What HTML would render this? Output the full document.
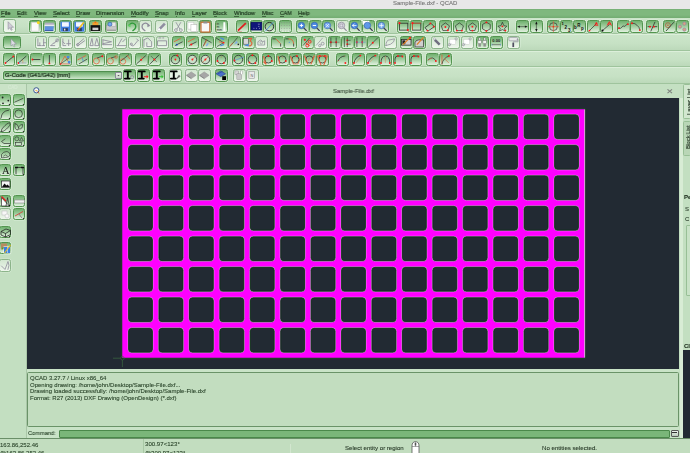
<!DOCTYPE html><html><head><meta charset="utf-8"><style>
*{margin:0;padding:0;box-sizing:border-box}
html,body{width:690px;height:453px;overflow:hidden;background:#c3dfc1;font-family:"Liberation Sans", sans-serif;}
.a{position:absolute}
.t{position:absolute;white-space:nowrap;line-height:1;-webkit-text-stroke:0.1px currentColor;will-change:transform}
.b,.d,.f,.p{position:absolute;border-radius:2.5px}
.b{border:1px solid #53954f;background:linear-gradient(#6fb06e,#a2cea0 50%,#e2f1e0);box-shadow:0 0 0 .6px rgba(228,243,226,.7)}
.d{border:1px solid #8cb48a;background:linear-gradient(#d2e6d0,#eef6ec);box-shadow:0 0 0 .6px rgba(228,243,226,.6)}
.f{border:1px solid #86b384;background:linear-gradient(#e2eee0,#eff7ee);}
.p{border:1px solid #4f914e;background:linear-gradient(#5fa35e,#93c691 55%,#d6ebd4);}
.sep{position:absolute;left:0;width:690px;height:1px;background:#9fc49d}
.sepl{position:absolute;left:0;width:690px;height:1px;background:#dcefda}
svg.i{position:absolute;overflow:visible}
</style></head><body>
<div class="a" style="left:0;top:0;width:690px;height:8.5px;background:#e8e8e8"></div>
<div class="t" style="left:392.5px;top:-0.41px;font-size:6.0px;color:#747474;">Sample-File.dxf - QCAD</div>
<div class="a" style="left:0;top:9px;width:690px;height:9px;background:linear-gradient(#72ac71 0px,#7fb87e 1px,#7fb87e 6px,#76b075 8px,#72ab71)"></div>
<div class="t" style="left:1.2px;top:9.99px;font-size:6.0px;color:#243f25;-webkit-text-stroke:0.22px #243f25;">File</div>
<div class="a" style="left:1.40px;top:15.9px;width:3.68px;height:0.5px;background:rgba(40,70,40,.7)"></div>
<div class="t" style="left:17.4px;top:9.99px;font-size:6.0px;color:#243f25;transform:scaleX(0.938);transform-origin:0 0;-webkit-text-stroke:0.22px #243f25;">Edit</div>
<div class="a" style="left:17.60px;top:15.9px;width:3.75px;height:0.5px;background:rgba(40,70,40,.7)"></div>
<div class="t" style="left:34.1px;top:9.99px;font-size:6.0px;color:#243f25;transform:scaleX(0.954);transform-origin:0 0;-webkit-text-stroke:0.22px #243f25;">View</div>
<div class="a" style="left:34.30px;top:15.9px;width:3.82px;height:0.5px;background:rgba(40,70,40,.7)"></div>
<div class="t" style="left:52.9px;top:9.99px;font-size:6.0px;color:#243f25;-webkit-text-stroke:0.22px #243f25;">Select</div>
<div class="a" style="left:53.10px;top:15.9px;width:4.01px;height:0.5px;background:rgba(40,70,40,.7)"></div>
<div class="t" style="left:75.9px;top:9.99px;font-size:6.0px;color:#243f25;transform:scaleX(1.007);transform-origin:0 0;-webkit-text-stroke:0.22px #243f25;">Draw</div>
<div class="a" style="left:76.10px;top:15.9px;width:4.36px;height:0.5px;background:rgba(40,70,40,.7)"></div>
<div class="t" style="left:96.3px;top:9.99px;font-size:6.0px;color:#243f25;-webkit-text-stroke:0.22px #243f25;">Dimension</div>
<div class="a" style="left:100.83px;top:15.9px;width:1.60px;height:0.5px;background:rgba(40,70,40,.7)"></div>
<div class="t" style="left:131px;top:9.99px;font-size:6.0px;color:#243f25;transform:scaleX(0.990);transform-origin:0 0;-webkit-text-stroke:0.22px #243f25;">Modify</div>
<div class="a" style="left:131.20px;top:15.9px;width:4.95px;height:0.5px;background:rgba(40,70,40,.7)"></div>
<div class="t" style="left:155px;top:9.99px;font-size:6.0px;color:#243f25;transform:scaleX(0.963);transform-origin:0 0;-webkit-text-stroke:0.22px #243f25;">Snap</div>
<div class="a" style="left:155.20px;top:15.9px;width:3.86px;height:0.5px;background:rgba(40,70,40,.7)"></div>
<div class="t" style="left:175.4px;top:9.99px;font-size:6.0px;color:#243f25;transform:scaleX(0.979);transform-origin:0 0;-webkit-text-stroke:0.22px #243f25;">Info</div>
<div class="a" style="left:175.60px;top:15.9px;width:1.63px;height:0.5px;background:rgba(40,70,40,.7)"></div>
<div class="t" style="left:191.9px;top:9.99px;font-size:6.0px;color:#243f25;transform:scaleX(0.986);transform-origin:0 0;-webkit-text-stroke:0.22px #243f25;">Layer</div>
<div class="a" style="left:192.10px;top:15.9px;width:3.29px;height:0.5px;background:rgba(40,70,40,.7)"></div>
<div class="t" style="left:213.3px;top:9.99px;font-size:6.0px;color:#243f25;transform:scaleX(0.941);transform-origin:0 0;-webkit-text-stroke:0.22px #243f25;">Block</div>
<div class="a" style="left:213.50px;top:15.9px;width:3.76px;height:0.5px;background:rgba(40,70,40,.7)"></div>
<div class="t" style="left:233.7px;top:9.99px;font-size:6.0px;color:#243f25;transform:scaleX(0.984);transform-origin:0 0;-webkit-text-stroke:0.22px #243f25;">Window</div>
<div class="a" style="left:233.90px;top:15.9px;width:5.57px;height:0.5px;background:rgba(40,70,40,.7)"></div>
<div class="t" style="left:261.6px;top:9.99px;font-size:6.0px;color:#243f25;transform:scaleX(0.941);transform-origin:0 0;-webkit-text-stroke:0.22px #243f25;">Misc</div>
<div class="a" style="left:261.80px;top:15.9px;width:4.70px;height:0.5px;background:rgba(40,70,40,.7)"></div>
<div class="t" style="left:279.8px;top:9.99px;font-size:6.0px;color:#243f25;transform:scaleX(0.885);transform-origin:0 0;-webkit-text-stroke:0.22px #243f25;">CAM</div>
<div class="a" style="left:280.00px;top:15.9px;width:3.83px;height:0.5px;background:rgba(40,70,40,.7)"></div>
<div class="t" style="left:298.3px;top:9.99px;font-size:6.0px;color:#243f25;transform:scaleX(0.948);transform-origin:0 0;-webkit-text-stroke:0.22px #243f25;">Help</div>
<div class="a" style="left:298.50px;top:15.9px;width:4.11px;height:0.5px;background:rgba(40,70,40,.7)"></div>
<div class="a" style="left:0;top:17.5px;width:690px;height:66px;background:#c6e1c4"></div>
<div class="sepl" style="top:17.5px"></div>
<div class="a" style="left:0;top:18px;width:690px;height:15px;background:linear-gradient(#cce5ca,#c6e1c4 60%,#bcd9ba)"></div>
<div class="a" style="left:0;top:34px;width:690px;height:16px;background:linear-gradient(#cce5ca,#c6e1c4 60%,#bcd9ba)"></div>
<div class="a" style="left:0;top:51px;width:690px;height:15px;background:linear-gradient(#cce5ca,#c6e1c4 60%,#bcd9ba)"></div>
<div class="a" style="left:0;top:67px;width:690px;height:16px;background:linear-gradient(#cce5ca,#c6e1c4 60%,#bcd9ba)"></div>
<div class="sep" style="top:33px"></div>
<div class="sepl" style="top:34px"></div>
<div class="sep" style="top:50px"></div>
<div class="sepl" style="top:51px"></div>
<div class="sep" style="top:66px"></div>
<div class="sepl" style="top:67px"></div>
<div class="sep" style="top:83px"></div>
<div class="sepl" style="top:84px"></div>
<div class="f" style="left:2.5px;top:19.3px;width:13.3px;height:13.5px"></div>
<svg class="i" style="left:2.5px;top:19.3px" width="13.3" height="13.5" viewBox="0 0 13 13"><path d="M5,3 L5,10 L6.6,8.5 L8,11 L9,10.5 L7.8,8 L10,8 Z" stroke="#8e8c9a" stroke-width="0.6" fill="#d0ccd8" stroke-linejoin="round" stroke-linecap="round"/></svg>
<div class="b" style="left:29px;top:19.5px;width:12.8px;height:13.3px"></div>
<svg class="i" style="left:29px;top:19.5px" width="12.8" height="13.3" viewBox="0 0 13 13"><rect x="2.5" y="2" width="7.5" height="9" fill="#fafafa" stroke="#c8c8c8" stroke-width="0.5" rx="0"/><circle cx="9.5" cy="2.5" r="1.5" fill="#f8d81a"/></svg>
<div class="b" style="left:43px;top:19.5px;width:12.8px;height:13.3px"></div>
<svg class="i" style="left:43px;top:19.5px" width="12.8" height="13.3" viewBox="0 0 13 13"><rect x="2" y="2.5" width="9" height="3" fill="#b0aec0" stroke="none" stroke-width="0.6" rx="0"/><rect x="1.5" y="4.5" width="10" height="1.5" fill="#e8e8f0" stroke="none" stroke-width="0.6" rx="0"/><path d="M2,6 L11,6 L10.5,10.5 L1.5,10.5 Z" stroke="none" stroke-width="0" fill="#5e90e0" stroke-linejoin="round" stroke-linecap="round"/><line x1="1.5" y1="10.5" x2="10.5" y2="10.5" stroke="#1c3aa0" stroke-width="0.8"/></svg>
<div class="b" style="left:59px;top:19.5px;width:12.8px;height:13.3px"></div>
<svg class="i" style="left:59px;top:19.5px" width="12.8" height="13.3" viewBox="0 0 13 13"><rect x="1.5" y="1.5" width="10" height="10" fill="#3f7de0" stroke="none" stroke-width="0.6" rx="0"/><rect x="3" y="2" width="7" height="4.5" fill="#f4f6ff" stroke="none" stroke-width="0.6" rx="0"/><rect x="4" y="8" width="5" height="3" fill="#2a3a60" stroke="none" stroke-width="0.6" rx="0"/><rect x="5" y="8.5" width="1.5" height="2" fill="#e0e0f0" stroke="none" stroke-width="0.6" rx="0"/></svg>
<div class="b" style="left:73px;top:19.5px;width:12.8px;height:13.3px"></div>
<svg class="i" style="left:73px;top:19.5px" width="12.8" height="13.3" viewBox="0 0 13 13"><rect x="1.5" y="1.5" width="10" height="10" fill="#3f7de0" stroke="none" stroke-width="0.6" rx="0"/><rect x="3" y="2" width="7" height="4.5" fill="#f4f6ff" stroke="none" stroke-width="0.6" rx="0"/><rect x="4" y="8" width="5" height="3" fill="#2a3a60" stroke="none" stroke-width="0.6" rx="0"/><line x1="5" y1="10" x2="11" y2="2" stroke="#f0c020" stroke-width="1.6"/><line x1="5" y1="10" x2="6.5" y2="8" stroke="#c04020" stroke-width="1.2"/></svg>
<div class="b" style="left:89px;top:19.5px;width:12.8px;height:13.3px"></div>
<svg class="i" style="left:89px;top:19.5px" width="12.8" height="13.3" viewBox="0 0 13 13"><rect x="3.5" y="2" width="6" height="4" fill="#f0a030" stroke="none" stroke-width="0.6" rx="0"/><rect x="1.5" y="5" width="10" height="6" fill="#101010" stroke="none" stroke-width="0.6" rx="0"/><rect x="3.5" y="7.5" width="6" height="2.5" fill="#d0d0d0" stroke="none" stroke-width="0.6" rx="0"/><circle cx="6.5" cy="2" r="1" fill="#f07010"/></svg>
<div class="b" style="left:105px;top:19.5px;width:12.8px;height:13.3px"></div>
<svg class="i" style="left:105px;top:19.5px" width="12.8" height="13.3" viewBox="0 0 13 13"><rect x="1.5" y="5" width="10" height="5.5" fill="#c8c8c8" stroke="#909090" stroke-width="0.5" rx="0"/><rect x="7" y="2" width="4" height="4" fill="#e8e8e8" stroke="#a0a0a0" stroke-width="0.4" rx="0"/><circle cx="5" cy="4" r="2" stroke="#3060b0" stroke-width="0.6" fill="#78a8f0"/><line x1="2" y1="10" x2="11" y2="10" stroke="#808080" stroke-width="0.6"/></svg>
<div class="b" style="left:126px;top:19.5px;width:12.8px;height:13.3px"></div>
<svg class="i" style="left:126px;top:19.5px" width="12.8" height="13.3" viewBox="0 0 13 13"><path d="M3,5 Q6,1 9.5,4.5 Q11,8 7,10.5" stroke="#2f9a3a" stroke-width="1.4" fill="none" stroke-linejoin="round" stroke-linecap="round"/><path d="M1.5,5.5 L4.5,3.5 L4.5,7 Z" stroke="none" stroke-width="0" fill="#5cd060" stroke-linejoin="round" stroke-linecap="round"/></svg>
<div class="d" style="left:139px;top:19.5px;width:12.8px;height:13.3px"></div>
<svg class="i" style="left:139px;top:19.5px" width="12.8" height="13.3" viewBox="0 0 13 13"><path d="M10,5 Q7,1 3.5,4.5 Q2,8 6,10.5" stroke="#8e8c9a" stroke-width="1.3" fill="none" stroke-linejoin="round" stroke-linecap="round"/><path d="M11.5,5.5 L8.5,3.5 L8.5,7 Z" stroke="none" stroke-width="0" fill="#8e8c9a" stroke-linejoin="round" stroke-linecap="round"/></svg>
<div class="d" style="left:155px;top:19.5px;width:12.8px;height:13.3px"></div>
<svg class="i" style="left:155px;top:19.5px" width="12.8" height="13.3" viewBox="0 0 13 13"><line x1="3.5" y1="10" x2="10" y2="3.5" stroke="#8f8da0" stroke-width="2.6"/><line x1="3.5" y1="10" x2="5" y2="8.5" stroke="#ffffff" stroke-width="2.4"/></svg>
<div class="d" style="left:172px;top:19.5px;width:12.8px;height:13.3px"></div>
<svg class="i" style="left:172px;top:19.5px" width="12.8" height="13.3" viewBox="0 0 13 13"><line x1="4" y1="2" x2="8" y2="9" stroke="#8e8c9a" stroke-width="0.8"/><line x1="9" y1="2" x2="5" y2="9" stroke="#8e8c9a" stroke-width="0.8"/><circle cx="4" cy="10" r="1.4" stroke="#8e8c9a" stroke-width="0.8" fill="none"/><circle cx="9" cy="10" r="1.4" stroke="#8e8c9a" stroke-width="0.8" fill="none"/></svg>
<div class="d" style="left:186px;top:19.5px;width:12.8px;height:13.3px"></div>
<svg class="i" style="left:186px;top:19.5px" width="12.8" height="13.3" viewBox="0 0 13 13"><rect x="2" y="2" width="6" height="7" fill="#ffffff" stroke="#c0c0c0" stroke-width="0.5" rx="0"/><rect x="5" y="4.5" width="6" height="7" fill="#ffffff" stroke="#b0b0b0" stroke-width="0.5" rx="0"/></svg>
<div class="b" style="left:199px;top:19.5px;width:12.8px;height:13.3px"></div>
<svg class="i" style="left:199px;top:19.5px" width="12.8" height="13.3" viewBox="0 0 13 13"><rect x="2" y="2" width="9" height="10" fill="#f8f8f8" stroke="#c46a30" stroke-width="1.2" rx="0"/><rect x="4.5" y="1.3" width="4" height="2" fill="#909090" stroke="none" stroke-width="0.6" rx="0"/></svg>
<div class="b" style="left:215px;top:19.5px;width:12.8px;height:13.3px"></div>
<svg class="i" style="left:215px;top:19.5px" width="12.8" height="13.3" viewBox="0 0 13 13"><text x="1.5" y="5" font-size="3.5" fill="#2b2f2b" font-family="Liberation Sans" font-weight="normal" text-anchor="start">in</text><text x="1.5" y="8" font-size="3.5" fill="#2b2f2b" font-family="Liberation Sans" font-weight="normal" text-anchor="start">m</text><text x="1.5" y="11" font-size="3.5" fill="#2b2f2b" font-family="Liberation Sans" font-weight="normal" text-anchor="start">mm</text><rect x="8.5" y="2" width="2" height="9" fill="#ffffff" stroke="none" stroke-width="0.6" rx="0"/></svg>
<div class="b" style="left:236px;top:19.5px;width:12.8px;height:13.3px"></div>
<svg class="i" style="left:236px;top:19.5px" width="12.8" height="13.3" viewBox="0 0 13 13"><line x1="2" y1="10.5" x2="10" y2="3" stroke="#e02020" stroke-width="1.8"/><line x1="1.5" y1="11.5" x2="6" y2="11.5" stroke="#e08080" stroke-width="0.6"/></svg>
<div class="b" style="left:250px;top:19.5px;width:12.8px;height:13.3px"></div>
<svg class="i" style="left:250px;top:19.5px" width="12.8" height="13.3" viewBox="0 0 13 13"><rect x="1" y="2" width="11" height="8" fill="#10167a" stroke="#000050" stroke-width="0.5" rx="0"/><circle cx="4" cy="8" r="0.5" fill="#fff"/><circle cx="6.5" cy="8" r="0.5" fill="#fff"/><circle cx="9" cy="6" r="0.5" fill="#fff"/><circle cx="9.5" cy="8" r="0.5" fill="#fff"/><line x1="8" y1="4" x2="10" y2="4" stroke="#fff" stroke-width="0.4"/></svg>
<div class="b" style="left:263px;top:19.5px;width:12.8px;height:13.3px"></div>
<svg class="i" style="left:263px;top:19.5px" width="12.8" height="13.3" viewBox="0 0 13 13"><circle cx="6.5" cy="6.5" r="4.3" stroke="#222" stroke-width="0.9" fill="none"/><line x1="2.5" y1="11" x2="10.5" y2="2" stroke="#4a88e0" stroke-width="0.8"/></svg>
<div class="b" style="left:279px;top:19.5px;width:12.8px;height:13.3px"></div>
<svg class="i" style="left:279px;top:19.5px" width="12.8" height="13.3" viewBox="0 0 13 13"><circle cx="2.5" cy="2.5" r="0.45" fill="#8a8a8a"/><circle cx="2.5" cy="5.3" r="0.45" fill="#8a8a8a"/><circle cx="2.5" cy="8.1" r="0.45" fill="#8a8a8a"/><circle cx="2.5" cy="10.899999999999999" r="0.45" fill="#8a8a8a"/><circle cx="5.3" cy="2.5" r="0.45" fill="#8a8a8a"/><circle cx="5.3" cy="5.3" r="0.45" fill="#8a8a8a"/><circle cx="5.3" cy="8.1" r="0.45" fill="#8a8a8a"/><circle cx="5.3" cy="10.899999999999999" r="0.45" fill="#8a8a8a"/><circle cx="8.1" cy="2.5" r="0.45" fill="#8a8a8a"/><circle cx="8.1" cy="5.3" r="0.45" fill="#8a8a8a"/><circle cx="8.1" cy="8.1" r="0.45" fill="#8a8a8a"/><circle cx="8.1" cy="10.899999999999999" r="0.45" fill="#8a8a8a"/><circle cx="10.899999999999999" cy="2.5" r="0.45" fill="#8a8a8a"/><circle cx="10.899999999999999" cy="5.3" r="0.45" fill="#8a8a8a"/><circle cx="10.899999999999999" cy="8.1" r="0.45" fill="#8a8a8a"/><circle cx="10.899999999999999" cy="10.899999999999999" r="0.45" fill="#8a8a8a"/></svg>
<div class="b" style="left:296px;top:19.5px;width:12.8px;height:13.3px"></div>
<svg class="i" style="left:296px;top:19.5px" width="12.8" height="13.3" viewBox="0 0 13 13"><circle cx="5.5" cy="5.3" r="3.3" stroke="#2f5fa8" stroke-width="0.6" fill="#4a88e0"/><line x1="3.8" y1="5.3" x2="7.2" y2="5.3" stroke="#fff" stroke-width="1"/><line x1="5.5" y1="3.6" x2="5.5" y2="7" stroke="#fff" stroke-width="1"/><line x1="7.9" y1="7.8" x2="10.8" y2="10.8" stroke="#3a3850" stroke-width="1.3"/></svg>
<div class="b" style="left:309px;top:19.5px;width:12.8px;height:13.3px"></div>
<svg class="i" style="left:309px;top:19.5px" width="12.8" height="13.3" viewBox="0 0 13 13"><circle cx="5.5" cy="5.3" r="3.3" stroke="#2f5fa8" stroke-width="0.6" fill="#4a88e0"/><line x1="3.8" y1="5.3" x2="7.2" y2="5.3" stroke="#fff" stroke-width="1"/><line x1="7.9" y1="7.8" x2="10.8" y2="10.8" stroke="#3a3850" stroke-width="1.3"/></svg>
<div class="b" style="left:322px;top:19.5px;width:12.8px;height:13.3px"></div>
<svg class="i" style="left:322px;top:19.5px" width="12.8" height="13.3" viewBox="0 0 13 13"><circle cx="5.5" cy="5.3" r="3.3" stroke="#2f5fa8" stroke-width="0.6" fill="#78a8f0"/><path d="M4,4 L7,7 M7,4 L4,7" stroke="#fff" stroke-width="0.7" fill="none" stroke-linejoin="round" stroke-linecap="round"/><line x1="7.9" y1="7.8" x2="10.8" y2="10.8" stroke="#3a3850" stroke-width="1.3"/></svg>
<div class="d" style="left:336px;top:19.5px;width:12.8px;height:13.3px"></div>
<svg class="i" style="left:336px;top:19.5px" width="12.8" height="13.3" viewBox="0 0 13 13"><circle cx="5.5" cy="5.3" r="3.3" stroke="#8e8c9a" stroke-width="0.8" fill="#e0dee8"/><rect x="4" y="3.8" width="3" height="3" fill="none" stroke="#8e8c9a" stroke-width="0.6" rx="0"/><line x1="7.9" y1="7.8" x2="10.8" y2="10.8" stroke="#8e8c9a" stroke-width="1.2"/></svg>
<div class="b" style="left:349px;top:19.5px;width:12.8px;height:13.3px"></div>
<svg class="i" style="left:349px;top:19.5px" width="12.8" height="13.3" viewBox="0 0 13 13"><circle cx="5.5" cy="5.3" r="3.3" stroke="#2f5fa8" stroke-width="0.6" fill="#4a88e0"/><path d="M3.8,5.3 L7.2,5.3 M3.8,5.3 L5.2,4 M3.8,5.3 L5.2,6.6" stroke="#fff" stroke-width="0.8" fill="none" stroke-linejoin="round" stroke-linecap="round"/><line x1="7.9" y1="7.8" x2="10.8" y2="10.8" stroke="#3a3850" stroke-width="1.3"/></svg>
<div class="b" style="left:362px;top:19.5px;width:12.8px;height:13.3px"></div>
<svg class="i" style="left:362px;top:19.5px" width="12.8" height="13.3" viewBox="0 0 13 13"><rect x="0.5" y="0.5" width="7" height="4" fill="#ffffff" stroke="none" stroke-width="0.6" rx="0"/><circle cx="5.5" cy="5.3" r="3.3" stroke="#2f5fa8" stroke-width="0.6" fill="#5e98e8"/><line x1="7.9" y1="7.8" x2="10.8" y2="10.8" stroke="#3a3850" stroke-width="1.3"/></svg>
<div class="b" style="left:376px;top:19.5px;width:12.8px;height:13.3px"></div>
<svg class="i" style="left:376px;top:19.5px" width="12.8" height="13.3" viewBox="0 0 13 13"><circle cx="5.5" cy="5.3" r="3.3" stroke="#2f5fa8" stroke-width="0.6" fill="#80b0f0"/><path d="M5.5,3.5 L5.5,7 M3.8,5.3 L7.2,5.3" stroke="#fff" stroke-width="0.7" fill="none" stroke-linejoin="round" stroke-linecap="round"/><line x1="7.9" y1="7.8" x2="10.8" y2="10.8" stroke="#3a3850" stroke-width="1.3"/></svg>
<div class="b" style="left:397px;top:19.5px;width:12.8px;height:13.3px"></div>
<svg class="i" style="left:397px;top:19.5px" width="12.8" height="13.3" viewBox="0 0 13 13"><rect x="2.5" y="3" width="8.5" height="7" fill="none" stroke="#2b2f2b" stroke-width="0.8" rx="0"/><circle cx="2.5" cy="3" r="1.1" fill="#ff1a1a"/><circle cx="11" cy="10" r="1.1" fill="#ff1a1a"/></svg>
<div class="b" style="left:410px;top:19.5px;width:12.8px;height:13.3px"></div>
<svg class="i" style="left:410px;top:19.5px" width="12.8" height="13.3" viewBox="0 0 13 13"><rect x="2.5" y="3" width="8.5" height="7" fill="none" stroke="#2b2f2b" stroke-width="0.8" rx="0"/><line x1="2.5" y1="3" x2="11" y2="3" stroke="#e0633c" stroke-width="0.8"/><line x1="2.5" y1="3" x2="2.5" y2="10" stroke="#e0633c" stroke-width="0.8"/><circle cx="2.5" cy="3" r="1.1" fill="#ff1a1a"/></svg>
<div class="b" style="left:423px;top:19.5px;width:12.8px;height:13.3px"></div>
<svg class="i" style="left:423px;top:19.5px" width="12.8" height="13.3" viewBox="0 0 13 13"><polygon points="2.00,7.50 8.00,3.00 11.50,6.50 5.00,11.00" stroke="#2b2f2b" stroke-width="0.8" fill="none"/><circle cx="7.5" cy="3.2" r="0.95" fill="#ff1a1a"/><circle cx="11" cy="6.5" r="0.95" fill="#ff1a1a"/><circle cx="4.5" cy="10.5" r="0.95" fill="#ff1a1a"/></svg>
<div class="b" style="left:439px;top:19.5px;width:12.8px;height:13.3px"></div>
<svg class="i" style="left:439px;top:19.5px" width="12.8" height="13.3" viewBox="0 0 13 13"><polygon points="6.50,2.70 10.59,5.67 9.03,10.48 3.97,10.48 2.41,5.67" stroke="#2b2f2b" stroke-width="0.7" fill="none"/><circle cx="6.5" cy="6.8" r="0.95" fill="#ff1a1a"/><circle cx="9" cy="10.2" r="0.95" fill="#ff1a1a"/></svg>
<div class="b" style="left:453px;top:19.5px;width:12.8px;height:13.3px"></div>
<svg class="i" style="left:453px;top:19.5px" width="12.8" height="13.3" viewBox="0 0 13 13"><polygon points="6.50,2.70 10.59,5.67 9.03,10.48 3.97,10.48 2.41,5.67" stroke="#2b2f2b" stroke-width="0.7" fill="none"/><circle cx="4" cy="10.5" r="0.95" fill="#ff1a1a"/><circle cx="9" cy="10.5" r="0.95" fill="#ff1a1a"/></svg>
<div class="b" style="left:466px;top:19.5px;width:12.8px;height:13.3px"></div>
<svg class="i" style="left:466px;top:19.5px" width="12.8" height="13.3" viewBox="0 0 13 13"><polygon points="6.50,2.70 10.59,5.67 9.03,10.48 3.97,10.48 2.41,5.67" stroke="#2b2f2b" stroke-width="0.7" fill="none"/><circle cx="6.5" cy="6.5" r="0.95" fill="#ff1a1a"/><circle cx="6.5" cy="10.5" r="0.95" fill="#ff1a1a"/></svg>
<div class="b" style="left:480px;top:19.5px;width:12.8px;height:13.3px"></div>
<svg class="i" style="left:480px;top:19.5px" width="12.8" height="13.3" viewBox="0 0 13 13"><polygon points="6.50,2.00 10.40,4.25 10.40,8.75 6.50,11.00 2.60,8.75 2.60,4.25" stroke="#2b2f2b" stroke-width="0.7" fill="none"/><circle cx="6.5" cy="2.2" r="0.95" fill="#ff1a1a"/><circle cx="6.5" cy="10.8" r="0.95" fill="#ff1a1a"/></svg>
<div class="b" style="left:496px;top:19.5px;width:12.8px;height:13.3px"></div>
<svg class="i" style="left:496px;top:19.5px" width="12.8" height="13.3" viewBox="0 0 13 13"><polygon points="6.50,2.00 8.00,5.50 11.00,6.00 8.70,8.30 9.50,11.00 6.50,9.50 3.50,11.00 4.30,8.30 2.00,6.00 5.00,5.50" stroke="#2b2f2b" stroke-width="0.7" fill="none"/><circle cx="6.5" cy="6.2" r="0.95" fill="#ff1a1a"/><circle cx="9.5" cy="10.5" r="0.95" fill="#ff1a1a"/></svg>
<div class="b" style="left:516px;top:19.5px;width:12.8px;height:13.3px"></div>
<svg class="i" style="left:516px;top:19.5px" width="12.8" height="13.3" viewBox="0 0 13 13"><line x1="1.5" y1="6.5" x2="11.5" y2="6.5" stroke="#2b2f2b" stroke-width="0.6"/><path d="M1.5,6.5 L4,5.3 L4,7.7 Z" stroke="none" stroke-width="0" fill="#111" stroke-linejoin="round" stroke-linecap="round"/><path d="M11.5,6.5 L9,5.3 L9,7.7 Z" stroke="none" stroke-width="0" fill="#111" stroke-linejoin="round" stroke-linecap="round"/></svg>
<div class="b" style="left:530px;top:19.5px;width:12.8px;height:13.3px"></div>
<svg class="i" style="left:530px;top:19.5px" width="12.8" height="13.3" viewBox="0 0 13 13"><line x1="6.5" y1="1.5" x2="6.5" y2="11.5" stroke="#2b2f2b" stroke-width="0.6"/><path d="M6.5,1.5 L5.3,4 L7.7,4 Z" stroke="none" stroke-width="0" fill="#111" stroke-linejoin="round" stroke-linecap="round"/><path d="M6.5,11.5 L5.3,9 L7.7,9 Z" stroke="none" stroke-width="0" fill="#111" stroke-linejoin="round" stroke-linecap="round"/></svg>
<div class="b" style="left:547px;top:19.5px;width:12.8px;height:13.3px"></div>
<svg class="i" style="left:547px;top:19.5px" width="12.8" height="13.3" viewBox="0 0 13 13"><circle cx="6.5" cy="6.5" r="4" stroke="#333" stroke-width="0.7" fill="none"/><line x1="6.5" y1="1" x2="6.5" y2="12" stroke="#e06040" stroke-width="0.7"/><line x1="1" y1="6.5" x2="12" y2="6.5" stroke="#e06040" stroke-width="0.7"/><circle cx="6.5" cy="6.5" r="0.9" fill="#e04020"/></svg>
<div class="b" style="left:560px;top:19.5px;width:12.8px;height:13.3px"></div>
<svg class="i" style="left:560px;top:19.5px" width="12.8" height="13.3" viewBox="0 0 13 13"><text x="1.5" y="5" font-size="4.2" fill="#111" font-family="Liberation Sans" font-weight="bold" text-anchor="start">1</text><text x="4.5" y="8.5" font-size="4.6" fill="#111" font-family="Liberation Sans" font-weight="bold" text-anchor="start">2</text><text x="8" y="12" font-size="4.6" fill="#111" font-family="Liberation Sans" font-weight="bold" text-anchor="start">3</text></svg>
<div class="b" style="left:573px;top:19.5px;width:12.8px;height:13.3px"></div>
<svg class="i" style="left:573px;top:19.5px" width="12.8" height="13.3" viewBox="0 0 13 13"><text x="1" y="9" font-size="4.5" fill="#111" font-family="Liberation Sans" font-weight="bold" text-anchor="start">b</text><text x="4.3" y="7" font-size="4.5" fill="#111" font-family="Liberation Sans" font-weight="bold" text-anchor="start">R</text><text x="8" y="9.5" font-size="4.5" fill="#111" font-family="Liberation Sans" font-weight="bold" text-anchor="start">p</text></svg>
<div class="b" style="left:587px;top:19.5px;width:12.8px;height:13.3px"></div>
<svg class="i" style="left:587px;top:19.5px" width="12.8" height="13.3" viewBox="0 0 13 13"><line x1="2.5" y1="10.5" x2="9.5" y2="3.5" stroke="#2b2f2b" stroke-width="0.7"/><path d="M8,5 L9.5,2 L11,5 Z" stroke="#ff1a1a" stroke-width="0.6" fill="none" stroke-linejoin="round" stroke-linecap="round"/><circle cx="2.5" cy="10.5" r="0.95" fill="#ff1a1a"/><circle cx="9.5" cy="3.5" r="0.9" fill="#ff1a1a"/></svg>
<div class="b" style="left:600px;top:19.5px;width:12.8px;height:13.3px"></div>
<svg class="i" style="left:600px;top:19.5px" width="12.8" height="13.3" viewBox="0 0 13 13"><line x1="2.5" y1="10.5" x2="9.5" y2="4.5" stroke="#2b2f2b" stroke-width="0.7"/><path d="M7.5,5 L9.5,1.5 L11.5,5 M8.3,3.8 L10.7,3.8" stroke="#ff1a1a" stroke-width="0.9" fill="none" stroke-linejoin="round" stroke-linecap="round"/><circle cx="2.5" cy="10.5" r="1.1" fill="#111"/></svg>
<div class="b" style="left:617px;top:19.5px;width:12.8px;height:13.3px"></div>
<svg class="i" style="left:617px;top:19.5px" width="12.8" height="13.3" viewBox="0 0 13 13"><path d="M2,8 Q4,9 5,7 Q6,5 7,6 Q8,7 9,5 Q10,4 11,4" stroke="#2b2f2b" stroke-width="0.7" fill="none" stroke-linejoin="round" stroke-linecap="round"/><circle cx="2" cy="8" r="0.95" fill="#ff1a1a"/><circle cx="11" cy="4" r="0.95" fill="#ff1a1a"/></svg>
<div class="b" style="left:630px;top:19.5px;width:12.8px;height:13.3px"></div>
<svg class="i" style="left:630px;top:19.5px" width="12.8" height="13.3" viewBox="0 0 13 13"><path d="M2,3 L5,3.5 L7,5 L9,7 L10,10" stroke="#2b2f2b" stroke-width="0.7" fill="none" stroke-linejoin="round" stroke-linecap="round"/><circle cx="2" cy="3" r="0.95" fill="#ff1a1a"/><circle cx="10" cy="10" r="0.95" fill="#ff1a1a"/></svg>
<div class="b" style="left:646px;top:19.5px;width:12.8px;height:13.3px"></div>
<svg class="i" style="left:646px;top:19.5px" width="12.8" height="13.3" viewBox="0 0 13 13"><path d="M2,6.5 L5,6.5 M8,6.5 L11,6.5 M9,2 L5,11" stroke="#2b2f2b" stroke-width="0.8" fill="none" stroke-linejoin="round" stroke-linecap="round"/><circle cx="4" cy="6.5" r="0.95" fill="#ff1a1a"/><circle cx="8" cy="6.5" r="0.95" fill="#ff1a1a"/></svg>
<div class="b" style="left:663px;top:19.5px;width:12.8px;height:13.3px"></div>
<svg class="i" style="left:663px;top:19.5px" width="12.8" height="13.3" viewBox="0 0 13 13"><circle cx="5" cy="5" r="2.5" stroke="#b06040" stroke-width="0.8" fill="none"/><circle cx="5" cy="5" r="0.8" fill="#e05030"/><line x1="3" y1="11" x2="11" y2="2" stroke="#2b2f2b" stroke-width="0.8"/></svg>
<div class="b" style="left:676px;top:19.5px;width:12.8px;height:13.3px"></div>
<svg class="i" style="left:676px;top:19.5px" width="12.8" height="13.3" viewBox="0 0 13 13"><circle cx="4" cy="6.5" r="1.6" stroke="#9088a8" stroke-width="0.7" fill="#e0a080"/><circle cx="8.5" cy="3.5" r="1.6" stroke="#9088a8" stroke-width="0.7" fill="#e0a080"/><circle cx="8.5" cy="9.5" r="1.6" stroke="#9088a8" stroke-width="0.7" fill="#e0a080"/></svg>
<div class="p" style="left:2.5px;top:36px;width:18px;height:12.5px"></div>
<svg class="i" style="left:2.5px;top:36px" width="18" height="12.5" viewBox="0 0 18 12.5"><path d="M8,3 L8,10 L9.6,8.5 L11,11 L12,10.5 L10.8,8 L13,8 Z" stroke="#8a8a98" stroke-width="0.5" fill="#dcdce4" stroke-linejoin="round" stroke-linecap="round"/></svg>
<div class="d" style="left:34.5px;top:36px;width:12.5px;height:12.5px"></div>
<svg class="i" style="left:34.5px;top:36px" width="12.5" height="12.5" viewBox="0 0 13 13"><path d="M3,3 L3,10 M3,10 L6,10 M5,7 L5,10 M9,3 L9,10 M7,10 L10,10 M9,7 L11,7" stroke="#8e8c9a" stroke-width="0.9" fill="none" stroke-linejoin="round" stroke-linecap="round"/></svg>
<div class="d" style="left:47.5px;top:36px;width:12.5px;height:12.5px"></div>
<svg class="i" style="left:47.5px;top:36px" width="12.5" height="12.5" viewBox="0 0 13 13"><path d="M3,10 L6,7 M3,10 L7,10 M8,6 L11,3 M6,8 L9,5" stroke="#8e8c9a" stroke-width="0.9" fill="none" stroke-linejoin="round" stroke-linecap="round"/><circle cx="9.5" cy="4.5" r="1.5" stroke="#8e8c9a" stroke-width="0.7" fill="none"/></svg>
<div class="d" style="left:60px;top:36px;width:12.5px;height:12.5px"></div>
<svg class="i" style="left:60px;top:36px" width="12.5" height="12.5" viewBox="0 0 13 13"><path d="M3,3 L3,10 L6,10 M3,6 L5,8 M9,4 L9,10 M7,8 L11,8" stroke="#8e8c9a" stroke-width="0.9" fill="none" stroke-linejoin="round" stroke-linecap="round"/></svg>
<div class="d" style="left:74px;top:36px;width:12.5px;height:12.5px"></div>
<svg class="i" style="left:74px;top:36px" width="12.5" height="12.5" viewBox="0 0 13 13"><path d="M3,9 L10,3 M4,10 L11,5 M3,9 L4,10" stroke="#8e8c9a" stroke-width="0.9" fill="none" stroke-linejoin="round" stroke-linecap="round"/><circle cx="4" cy="9" r="1.3" stroke="#8e8c9a" stroke-width="0.7" fill="none"/></svg>
<div class="d" style="left:87.5px;top:36px;width:12.5px;height:12.5px"></div>
<svg class="i" style="left:87.5px;top:36px" width="12.5" height="12.5" viewBox="0 0 13 13"><path d="M4,3 L2,10 L5,10 Z M9,3 L7,10 L11,10 Z" stroke="#8e8c9a" stroke-width="0.9" fill="none" stroke-linejoin="round" stroke-linecap="round"/></svg>
<div class="d" style="left:101px;top:36px;width:12.5px;height:12.5px"></div>
<svg class="i" style="left:101px;top:36px" width="12.5" height="12.5" viewBox="0 0 13 13"><path d="M2,4 L11,6 L2,8 M2,9 L11,9 M2,4 L2,9" stroke="#8e8c9a" stroke-width="0.9" fill="none" stroke-linejoin="round" stroke-linecap="round"/></svg>
<div class="d" style="left:114.5px;top:36px;width:12.5px;height:12.5px"></div>
<svg class="i" style="left:114.5px;top:36px" width="12.5" height="12.5" viewBox="0 0 13 13"><path d="M3,10 L7,3 M2,10 L11,10 M8,6 L11,3" stroke="#8e8c9a" stroke-width="0.9" fill="none" stroke-linejoin="round" stroke-linecap="round"/></svg>
<div class="d" style="left:128px;top:36px;width:12.5px;height:12.5px"></div>
<svg class="i" style="left:128px;top:36px" width="12.5" height="12.5" viewBox="0 0 13 13"><path d="M3,8 Q3,11 6,10 L10,5 M9,3 L11,5" stroke="#8e8c9a" stroke-width="0.9" fill="none" stroke-linejoin="round" stroke-linecap="round"/><circle cx="3.5" cy="8.5" r="1.2" stroke="#8e8c9a" stroke-width="0.7" fill="none"/></svg>
<div class="d" style="left:142px;top:36px;width:12.5px;height:12.5px"></div>
<svg class="i" style="left:142px;top:36px" width="12.5" height="12.5" viewBox="0 0 13 13"><path d="M2,4 L6,2 L10,6 L10,11 L5,11 L5,7 M2,4 L2,11" stroke="#8e8c9a" stroke-width="0.9" fill="none" stroke-linejoin="round" stroke-linecap="round"/></svg>
<div class="d" style="left:156px;top:36px;width:12.5px;height:12.5px"></div>
<svg class="i" style="left:156px;top:36px" width="12.5" height="12.5" viewBox="0 0 13 13"><path d="M2,5 L11,5 L11,10 L2,10 Z M3,2 L5,2 M7,2 L8,2" stroke="#8e8c9a" stroke-width="0.9" fill="none" stroke-linejoin="round" stroke-linecap="round"/></svg>
<div class="b" style="left:172px;top:36px;width:12.5px;height:12.5px"></div>
<svg class="i" style="left:172px;top:36px" width="12.5" height="12.5" viewBox="0 0 13 13"><line x1="2" y1="6" x2="9" y2="2.5" stroke="#e0633c" stroke-width="0.9"/><line x1="3" y1="10" x2="11" y2="6" stroke="#2b2f2b" stroke-width="0.8"/><circle cx="5" cy="9" r="0.9" fill="#2040c0"/></svg>
<div class="b" style="left:186px;top:36px;width:12.5px;height:12.5px"></div>
<svg class="i" style="left:186px;top:36px" width="12.5" height="12.5" viewBox="0 0 13 13"><line x1="2" y1="6" x2="9" y2="2.5" stroke="#e0633c" stroke-width="0.9"/><line x1="3" y1="10" x2="11" y2="6" stroke="#2b2f2b" stroke-width="0.8"/><circle cx="5.5" cy="8.8" r="1.1" fill="#ff1a1a"/></svg>
<div class="b" style="left:201px;top:36px;width:12.5px;height:12.5px"></div>
<svg class="i" style="left:201px;top:36px" width="12.5" height="12.5" viewBox="0 0 13 13"><line x1="1" y1="1.5" x2="11" y2="7" stroke="#2b2f2b" stroke-width="0.7"/><line x1="2" y1="11" x2="6" y2="3.5" stroke="#2b2f2b" stroke-width="0.7"/><line x1="6" y1="3.5" x2="3" y2="10" stroke="#e0633c" stroke-width="0.8"/><path d="M5,10 L7,7 L8,8 L6,11 Z" stroke="none" stroke-width="0" fill="#80a8f0" stroke-linejoin="round" stroke-linecap="round"/></svg>
<div class="b" style="left:215px;top:36px;width:12.5px;height:12.5px"></div>
<svg class="i" style="left:215px;top:36px" width="12.5" height="12.5" viewBox="0 0 13 13"><line x1="1" y1="2" x2="9" y2="7" stroke="#2b2f2b" stroke-width="0.7"/><line x1="2" y1="11" x2="9" y2="7" stroke="#2b2f2b" stroke-width="0.7"/><line x1="4" y1="6" x2="9" y2="7" stroke="#e0633c" stroke-width="0.8"/><circle cx="9" cy="7" r="0.9" fill="#ff1a1a"/><path d="M6,2 L9,3.5 M6,10 L9,9" stroke="#4a88e0" stroke-width="1.2" fill="none" stroke-linejoin="round" stroke-linecap="round"/></svg>
<div class="b" style="left:228px;top:36px;width:12.5px;height:12.5px"></div>
<svg class="i" style="left:228px;top:36px" width="12.5" height="12.5" viewBox="0 0 13 13"><line x1="2" y1="11" x2="10" y2="1.5" stroke="#2b2f2b" stroke-width="0.7"/><line x1="1.5" y1="11" x2="5" y2="7" stroke="#e0633c" stroke-width="0.8"/><path d="M6.5,9 L9,5 L10,7 Z" stroke="none" stroke-width="0" fill="#80a8f0" stroke-linejoin="round" stroke-linecap="round"/><rect x="10" y="8" width="1.5" height="1.5" fill="#222" stroke="none" stroke-width="0.6" rx="0"/></svg>
<div class="b" style="left:242px;top:36px;width:12.5px;height:12.5px"></div>
<svg class="i" style="left:242px;top:36px" width="12.5" height="12.5" viewBox="0 0 13 13"><rect x="1.5" y="2.5" width="5" height="6" fill="#d8d8d8" stroke="#333" stroke-width="0.5" rx="0"/><path d="M7,2.5 L10,2.5 L8.5,5.5 Q11,6 10,9 Q8.5,11 7,10" stroke="#e0633c" stroke-width="1.2" fill="none" stroke-linejoin="round" stroke-linecap="round"/><path d="M2,10 L7,8 L7,11 Z" stroke="none" stroke-width="0" fill="#4a88e0" stroke-linejoin="round" stroke-linecap="round"/></svg>
<div class="d" style="left:255px;top:36px;width:12.5px;height:12.5px"></div>
<svg class="i" style="left:255px;top:36px" width="12.5" height="12.5" viewBox="0 0 13 13"><path d="M3,9 L3,6 L6,4 L8,6 L10,5 L10,9 Z" stroke="#8e8c9a" stroke-width="0.8" fill="none" stroke-linejoin="round" stroke-linecap="round"/><circle cx="6.5" cy="7" r="1.3" stroke="#8e8c9a" stroke-width="0.6" fill="none"/></svg>
<div class="b" style="left:271px;top:36px;width:12.5px;height:12.5px"></div>
<svg class="i" style="left:271px;top:36px" width="12.5" height="12.5" viewBox="0 0 13 13"><line x1="1.5" y1="3" x2="5" y2="3" stroke="#2b2f2b" stroke-width="0.8"/><line x1="5" y1="3" x2="10" y2="8" stroke="#e0633c" stroke-width="0.9"/><line x1="10" y1="8" x2="10" y2="11" stroke="#2b2f2b" stroke-width="0.8"/></svg>
<div class="b" style="left:284px;top:36px;width:12.5px;height:12.5px"></div>
<svg class="i" style="left:284px;top:36px" width="12.5" height="12.5" viewBox="0 0 13 13"><line x1="1.5" y1="3" x2="5" y2="3" stroke="#2b2f2b" stroke-width="0.8"/><path d="M5,3 Q10,3 10,8" stroke="#e0633c" stroke-width="0.9" fill="none" stroke-linejoin="round" stroke-linecap="round"/><line x1="10" y1="8" x2="10" y2="11" stroke="#2b2f2b" stroke-width="0.8"/><circle cx="5.5" cy="6.5" r="0.6" fill="#4a88e0"/></svg>
<div class="b" style="left:301px;top:36px;width:12.5px;height:12.5px"></div>
<svg class="i" style="left:301px;top:36px" width="12.5" height="12.5" viewBox="0 0 13 13"><line x1="2" y1="10" x2="9" y2="2" stroke="#2b2f2b" stroke-width="0.7"/><circle cx="4" cy="4" r="1.1" fill="#ff1a1a"/><circle cx="9" cy="6" r="1.5" stroke="#ff1a1a" stroke-width="0.9" fill="none"/><circle cx="6.5" cy="10" r="1.5" stroke="#ff1a1a" stroke-width="0.9" fill="none"/><line x1="5" y1="7" x2="9" y2="10" stroke="#ff1a1a" stroke-width="0.9"/></svg>
<div class="d" style="left:314px;top:36px;width:12.5px;height:12.5px"></div>
<svg class="i" style="left:314px;top:36px" width="12.5" height="12.5" viewBox="0 0 13 13"><line x1="2" y1="10" x2="9" y2="2" stroke="#8e8c9a" stroke-width="0.7"/><circle cx="9" cy="8" r="1.5" stroke="#8e8c9a" stroke-width="0.8" fill="none"/><circle cx="6" cy="10" r="1.2" stroke="#8e8c9a" stroke-width="0.8" fill="none"/></svg>
<div class="b" style="left:328px;top:36px;width:12.5px;height:12.5px"></div>
<svg class="i" style="left:328px;top:36px" width="12.5" height="12.5" viewBox="0 0 13 13"><line x1="3" y1="1.5" x2="3" y2="11.5" stroke="#2b2f2b" stroke-width="0.7"/><line x1="8.5" y1="1.5" x2="8.5" y2="11.5" stroke="#2b2f2b" stroke-width="0.7"/><circle cx="3" cy="6.5" r="0.95" fill="#ff1a1a"/><circle cx="8.5" cy="6.5" r="0.95" fill="#ff1a1a"/><line x1="1" y1="6.5" x2="12" y2="6.5" stroke="#333" stroke-width="0.4"/></svg>
<div class="b" style="left:341px;top:36px;width:12.5px;height:12.5px"></div>
<svg class="i" style="left:341px;top:36px" width="12.5" height="12.5" viewBox="0 0 13 13"><line x1="3.5" y1="1.5" x2="3.5" y2="11.5" stroke="#2b2f2b" stroke-width="0.7"/><line x1="6.5" y1="1.5" x2="6.5" y2="11.5" stroke="#2b2f2b" stroke-width="0.7"/><circle cx="6.5" cy="4.5" r="0.95" fill="#ff1a1a"/><circle cx="6.5" cy="8.5" r="0.95" fill="#ff1a1a"/><line x1="6.5" y1="4.5" x2="10" y2="4.5" stroke="#2b2f2b" stroke-width="0.6"/><line x1="6.5" y1="8.5" x2="10" y2="8.5" stroke="#2b2f2b" stroke-width="0.6"/></svg>
<div class="b" style="left:354px;top:36px;width:12.5px;height:12.5px"></div>
<svg class="i" style="left:354px;top:36px" width="12.5" height="12.5" viewBox="0 0 13 13"><line x1="3" y1="1.5" x2="3" y2="11.5" stroke="#2b2f2b" stroke-width="0.7"/><line x1="8.5" y1="1.5" x2="8.5" y2="11.5" stroke="#2b2f2b" stroke-width="0.7"/><circle cx="3" cy="6.5" r="0.95" fill="#ff1a1a"/><circle cx="8.5" cy="6.5" r="0.95" fill="#ff1a1a"/><line x1="1" y1="6.5" x2="12" y2="6.5" stroke="#4a88e0" stroke-width="0.5"/></svg>
<div class="b" style="left:367px;top:36px;width:12.5px;height:12.5px"></div>
<svg class="i" style="left:367px;top:36px" width="12.5" height="12.5" viewBox="0 0 13 13"><line x1="1.5" y1="11.5" x2="11.5" y2="1.5" stroke="#2b2f2b" stroke-width="0.7"/><circle cx="6" cy="7" r="1" fill="#ff1a1a"/></svg>
<div class="d" style="left:384px;top:36px;width:12.5px;height:12.5px"></div>
<svg class="i" style="left:384px;top:36px" width="12.5" height="12.5" viewBox="0 0 13 13"><path d="M2,10 Q2,4 6,4 L11,3 L10,6 Q8,9 2,10 Z" stroke="#8e8c9a" stroke-width="0.8" fill="none" stroke-linejoin="round" stroke-linecap="round"/></svg>
<div class="b" style="left:400px;top:36px;width:12.5px;height:12.5px"></div>
<svg class="i" style="left:400px;top:36px" width="12.5" height="12.5" viewBox="0 0 13 13"><rect x="1.5" y="3.5" width="10" height="6" fill="#d0d0d0" stroke="#222" stroke-width="0.8" rx="0"/><rect x="2.5" y="4.5" width="3" height="4" fill="#222" stroke="none" stroke-width="0.6" rx="0"/><line x1="3" y1="9" x2="10.5" y2="1.5" stroke="#e08020" stroke-width="1.3"/><circle cx="10.5" cy="1.8" r="1" fill="#ff1a1a"/></svg>
<div class="b" style="left:413px;top:36px;width:12.5px;height:12.5px"></div>
<svg class="i" style="left:413px;top:36px" width="12.5" height="12.5" viewBox="0 0 13 13"><path d="M2,11 L2,7 Q3,4 6,4 L11,4 L11,11 Z" stroke="#333" stroke-width="0.8" fill="#d0d0d0" stroke-linejoin="round" stroke-linecap="round"/><line x1="4" y1="9" x2="11" y2="1.5" stroke="#e08020" stroke-width="1.3"/></svg>
<div class="d" style="left:431px;top:36px;width:12.5px;height:12.5px"></div>
<svg class="i" style="left:431px;top:36px" width="12.5" height="12.5" viewBox="0 0 13 13"><line x1="4" y1="4" x2="9" y2="9" stroke="#706e80" stroke-width="2.6"/><circle cx="3.5" cy="3" r="1" stroke="#8e8c9a" stroke-width="0.5" fill="#fff"/></svg>
<div class="d" style="left:447px;top:36px;width:12.5px;height:12.5px"></div>
<svg class="i" style="left:447px;top:36px" width="12.5" height="12.5" viewBox="0 0 13 13"><rect x="3" y="3.5" width="6" height="5" fill="#ffffff" stroke="#c0c0c0" stroke-width="0.4" rx="0"/><circle cx="9.5" cy="3" r="1.2" stroke="#8e8c9a" stroke-width="0.6" fill="none"/><circle cx="2.5" cy="9" r="1.2" stroke="#8e8c9a" stroke-width="0.6" fill="none"/><path d="M2,10 L4,8" stroke="#8e8c9a" stroke-width="0.6" fill="none" stroke-linejoin="round" stroke-linecap="round"/></svg>
<div class="d" style="left:461px;top:36px;width:12.5px;height:12.5px"></div>
<svg class="i" style="left:461px;top:36px" width="12.5" height="12.5" viewBox="0 0 13 13"><rect x="3" y="3.5" width="6" height="5" fill="#ffffff" stroke="#c0c0c0" stroke-width="0.4" rx="0"/><circle cx="9.5" cy="3" r="1.2" stroke="#8e8c9a" stroke-width="0.6" fill="none"/><circle cx="2.5" cy="9" r="1.2" stroke="#8e8c9a" stroke-width="0.6" fill="none"/><path d="M2,10 L4,8" stroke="#8e8c9a" stroke-width="0.6" fill="none" stroke-linejoin="round" stroke-linecap="round"/></svg>
<div class="b" style="left:476px;top:36px;width:12.5px;height:12.5px"></div>
<svg class="i" style="left:476px;top:36px" width="12.5" height="12.5" viewBox="0 0 13 13"><rect x="2.8" y="2" width="2" height="2.2" fill="#f0f0f0" stroke="#555" stroke-width="0.4" rx="0"/><rect x="1.9999999999999998" y="4.5" width="3.6" height="3.5" fill="#f4f4f4" stroke="#555" stroke-width="0.4" rx="0"/><rect x="2.5" y="8" width="2.6" height="3" fill="#909090" stroke="none" stroke-width="0.6" rx="0"/><rect x="8" y="2" width="2" height="2.2" fill="#f0f0f0" stroke="#555" stroke-width="0.4" rx="0"/><rect x="7.2" y="4.5" width="3.6" height="3.5" fill="#f4f4f4" stroke="#555" stroke-width="0.4" rx="0"/><rect x="7.7" y="8" width="2.6" height="3" fill="#909090" stroke="none" stroke-width="0.6" rx="0"/></svg>
<div class="b" style="left:490px;top:36px;width:12.5px;height:12.5px"></div>
<svg class="i" style="left:490px;top:36px" width="12.5" height="12.5" viewBox="0 0 13 13"><text x="6.5" y="6" font-size="4.2" fill="#222" font-family="Liberation Sans" font-weight="bold" text-anchor="middle">0.00</text><line x1="2" y1="9" x2="11" y2="9" stroke="#444" stroke-width="0.6"/><line x1="2" y1="8" x2="2" y2="10" stroke="#4a88e0" stroke-width="0.5"/><line x1="11" y1="8" x2="11" y2="10" stroke="#4a88e0" stroke-width="0.5"/></svg>
<div class="d" style="left:507px;top:36px;width:12.5px;height:12.5px"></div>
<svg class="i" style="left:507px;top:36px" width="12.5" height="12.5" viewBox="0 0 13 13"><rect x="2" y="1.5" width="9" height="3.5" fill="#e8e8e8" stroke="#8a8a98" stroke-width="0.6" rx="1"/><path d="M10.5,3.5 L11.5,3.5 L11.5,6 L6.5,6 L6.5,7" stroke="#8e8c9a" stroke-width="0.7" fill="none" stroke-linejoin="round" stroke-linecap="round"/><rect x="5.6" y="7" width="1.8" height="4.5" fill="#504e60" stroke="none" stroke-width="0.6" rx="0"/></svg>
<div class="b" style="left:2.5px;top:52.5px;width:12.8px;height:13px"></div>
<svg class="i" style="left:2.5px;top:52.5px" width="12.8" height="13" viewBox="0 0 13 13"><line x1="2.5" y1="10" x2="10.5" y2="3.5" stroke="#2b2f2b" stroke-width="0.8"/><circle cx="2.5" cy="10" r="0.95" fill="#ff1a1a"/><circle cx="10.5" cy="3.5" r="0.95" fill="#ff1a1a"/></svg>
<div class="b" style="left:16px;top:52.5px;width:12.8px;height:13px"></div>
<svg class="i" style="left:16px;top:52.5px" width="12.8" height="13" viewBox="0 0 13 13"><line x1="2.5" y1="10" x2="10.5" y2="3" stroke="#2b2f2b" stroke-width="0.8"/><line x1="2.5" y1="10" x2="10.5" y2="10" stroke="#9090c0" stroke-width="0.6"/><path d="M7,10 Q7.5,8 6.5,7" stroke="#e08050" stroke-width="0.5" fill="none" stroke-linejoin="round" stroke-linecap="round"/><circle cx="2.5" cy="10" r="0.95" fill="#ff1a1a"/><circle cx="3.5" cy="9.5" r="0.6" fill="#4a88e0"/></svg>
<div class="b" style="left:30px;top:52.5px;width:12.8px;height:13px"></div>
<svg class="i" style="left:30px;top:52.5px" width="12.8" height="13" viewBox="0 0 13 13"><line x1="2.5" y1="6.5" x2="10.5" y2="6.5" stroke="#2b2f2b" stroke-width="0.8"/><circle cx="2.5" cy="6.5" r="0.95" fill="#ff1a1a"/></svg>
<div class="b" style="left:43px;top:52.5px;width:12.8px;height:13px"></div>
<svg class="i" style="left:43px;top:52.5px" width="12.8" height="13" viewBox="0 0 13 13"><line x1="6.5" y1="2" x2="6.5" y2="10.5" stroke="#2b2f2b" stroke-width="0.8"/><circle cx="6.5" cy="10.5" r="0.95" fill="#ff1a1a"/></svg>
<div class="b" style="left:59px;top:52.5px;width:12.8px;height:13px"></div>
<svg class="i" style="left:59px;top:52.5px" width="12.8" height="13" viewBox="0 0 13 13"><polygon points="1.50,11.00 6.00,3.00 11.00,11.00" stroke="#e0633c" stroke-width="0.8" fill="none"/><line x1="1.5" y1="11" x2="10" y2="5" stroke="#2b2f2b" stroke-width="0.6"/><rect x="8" y="3" width="2.5" height="2" fill="#4a88e0" stroke="none" stroke-width="0.6" rx="0"/><rect x="9" y="8" width="2.5" height="2.5" fill="#4a88e0" stroke="none" stroke-width="0.6" rx="0"/><circle cx="1.5" cy="11" r="0.8" fill="#ff1a1a"/></svg>
<div class="b" style="left:76px;top:52.5px;width:12.8px;height:13px"></div>
<svg class="i" style="left:76px;top:52.5px" width="12.8" height="13" viewBox="0 0 13 13"><line x1="1.5" y1="7" x2="10" y2="2.5" stroke="#e0633c" stroke-width="0.9"/><line x1="3" y1="11" x2="11.5" y2="6" stroke="#2b2f2b" stroke-width="0.7"/><line x1="6" y1="4" x2="7.5" y2="8.5" stroke="#4a88e0" stroke-width="0.7"/></svg>
<div class="b" style="left:92px;top:52.5px;width:12.8px;height:13px"></div>
<svg class="i" style="left:92px;top:52.5px" width="12.8" height="13" viewBox="0 0 13 13"><circle cx="4.5" cy="8" r="3" stroke="#e0633c" stroke-width="0.8" fill="none"/><line x1="5" y1="5" x2="11" y2="3" stroke="#2b2f2b" stroke-width="0.7"/><circle cx="10.5" cy="3.2" r="1" fill="#ff1a1a"/></svg>
<div class="b" style="left:106px;top:52.5px;width:12.8px;height:13px"></div>
<svg class="i" style="left:106px;top:52.5px" width="12.8" height="13" viewBox="0 0 13 13"><circle cx="4.5" cy="8" r="3" stroke="#e0633c" stroke-width="0.8" fill="none"/><line x1="5" y1="5" x2="10" y2="3.5" stroke="#2b2f2b" stroke-width="0.7"/><circle cx="10.2" cy="4" r="1.3" stroke="#e0633c" stroke-width="0.7" fill="none"/></svg>
<div class="b" style="left:119px;top:52.5px;width:12.8px;height:13px"></div>
<svg class="i" style="left:119px;top:52.5px" width="12.8" height="13" viewBox="0 0 13 13"><circle cx="4" cy="8.5" r="2.8" stroke="#e0633c" stroke-width="0.8" fill="none"/><line x1="2" y1="8" x2="10" y2="1.5" stroke="#2b2f2b" stroke-width="0.7"/><line x1="8" y1="2" x2="11" y2="6" stroke="#e0633c" stroke-width="0.8"/></svg>
<div class="b" style="left:135px;top:52.5px;width:12.8px;height:13px"></div>
<svg class="i" style="left:135px;top:52.5px" width="12.8" height="13" viewBox="0 0 13 13"><line x1="1.5" y1="11" x2="11" y2="2.5" stroke="#2b2f2b" stroke-width="0.8"/><circle cx="6.3" cy="6.8" r="1" fill="#ff1a1a"/><path d="M6.5,3.5 L7.5,5.5 M8.5,3.5 L8,5" stroke="#c08050" stroke-width="0.5" fill="none" stroke-linejoin="round" stroke-linecap="round"/></svg>
<div class="b" style="left:148px;top:52.5px;width:12.8px;height:13px"></div>
<svg class="i" style="left:148px;top:52.5px" width="12.8" height="13" viewBox="0 0 13 13"><line x1="2" y1="11" x2="11" y2="2" stroke="#2b2f2b" stroke-width="0.8"/><line x1="3" y1="3" x2="9" y2="9" stroke="#2b2f2b" stroke-width="0.5"/><circle cx="6.5" cy="6.5" r="1" fill="#ff1a1a"/></svg>
<div class="b" style="left:169px;top:52.5px;width:12.8px;height:13px"></div>
<svg class="i" style="left:169px;top:52.5px" width="12.8" height="13" viewBox="0 0 13 13"><circle cx="6.5" cy="6.5" r="4.3" stroke="#2b2f2b" stroke-width="0.8" fill="none"/><circle cx="6.5" cy="6.5" r="0.9" fill="#ff1a1a"/><circle cx="8.5" cy="2.5" r="1" fill="#ff1a1a"/></svg>
<div class="b" style="left:186px;top:52.5px;width:12.8px;height:13px"></div>
<svg class="i" style="left:186px;top:52.5px" width="12.8" height="13" viewBox="0 0 13 13"><circle cx="6.5" cy="6.5" r="4.3" stroke="#2b2f2b" stroke-width="0.8" fill="#c8e0c8"/><circle cx="6.5" cy="6.5" r="1" fill="#ff1a1a"/><line x1="6.5" y1="6.5" x2="9.5" y2="3.5" stroke="#e0633c" stroke-width="0.5"/><path d="M2.5,10 L4,11" stroke="#4a88e0" stroke-width="0.5" fill="none" stroke-linejoin="round" stroke-linecap="round"/></svg>
<div class="b" style="left:199px;top:52.5px;width:12.8px;height:13px"></div>
<svg class="i" style="left:199px;top:52.5px" width="12.8" height="13" viewBox="0 0 13 13"><circle cx="6.5" cy="6.5" r="4.3" stroke="#2b2f2b" stroke-width="0.8" fill="#c8e0c8"/><line x1="3.5" y1="9.5" x2="9.5" y2="3.5" stroke="#e0633c" stroke-width="0.7"/><circle cx="6.5" cy="6.5" r="1" fill="#ff1a1a"/></svg>
<div class="b" style="left:215px;top:52.5px;width:12.8px;height:13px"></div>
<svg class="i" style="left:215px;top:52.5px" width="12.8" height="13" viewBox="0 0 13 13"><circle cx="6.5" cy="6.5" r="4.3" stroke="#2b2f2b" stroke-width="0.8" fill="none"/><circle cx="2.5" cy="8" r="0.95" fill="#ff1a1a"/><circle cx="9" cy="10" r="0.95" fill="#ff1a1a"/><line x1="6" y1="5" x2="7" y2="3" stroke="#c08050" stroke-width="0.5"/></svg>
<div class="b" style="left:232px;top:52.5px;width:12.8px;height:13px"></div>
<svg class="i" style="left:232px;top:52.5px" width="12.8" height="13" viewBox="0 0 13 13"><circle cx="6.5" cy="6.5" r="4.3" stroke="#2b2f2b" stroke-width="0.8" fill="none"/><line x1="1" y1="8" x2="12" y2="4" stroke="#4a88e0" stroke-width="0.6"/><circle cx="2.5" cy="7.5" r="0.95" fill="#ff1a1a"/></svg>
<div class="b" style="left:246px;top:52.5px;width:12.8px;height:13px"></div>
<svg class="i" style="left:246px;top:52.5px" width="12.8" height="13" viewBox="0 0 13 13"><circle cx="6.5" cy="6.5" r="4.3" stroke="#2b2f2b" stroke-width="0.8" fill="none"/><circle cx="6.5" cy="2.2" r="0.95" fill="#ff1a1a"/><circle cx="3.5" cy="9.5" r="0.95" fill="#ff1a1a"/><circle cx="9.5" cy="10" r="0.95" fill="#ff1a1a"/></svg>
<div class="b" style="left:262px;top:52.5px;width:12.8px;height:13px"></div>
<svg class="i" style="left:262px;top:52.5px" width="12.8" height="13" viewBox="0 0 13 13"><circle cx="6.5" cy="6.5" r="3.6" stroke="#2b2f2b" stroke-width="0.8" fill="none"/><line x1="1.5" y1="3" x2="4" y2="11" stroke="#e0633c" stroke-width="1.1"/><circle cx="6.5" cy="2.9" r="0.95" fill="#ff1a1a"/><circle cx="10" cy="8" r="0.95" fill="#ff1a1a"/><path d="M2,9 L4,11" stroke="#e0633c" stroke-width="1.3" fill="none" stroke-linejoin="round" stroke-linecap="round"/></svg>
<div class="b" style="left:276px;top:52.5px;width:12.8px;height:13px"></div>
<svg class="i" style="left:276px;top:52.5px" width="12.8" height="13" viewBox="0 0 13 13"><circle cx="6.5" cy="6.5" r="3.6" stroke="#2b2f2b" stroke-width="0.8" fill="none"/><line x1="2" y1="3" x2="4" y2="11" stroke="#e0633c" stroke-width="1.1"/><circle cx="10" cy="8" r="0.95" fill="#ff1a1a"/><path d="M6,3 L7,5" stroke="#c08050" stroke-width="0.5" fill="none" stroke-linejoin="round" stroke-linecap="round"/></svg>
<div class="b" style="left:289px;top:52.5px;width:12.8px;height:13px"></div>
<svg class="i" style="left:289px;top:52.5px" width="12.8" height="13" viewBox="0 0 13 13"><circle cx="6.5" cy="6.5" r="3.6" stroke="#2b2f2b" stroke-width="0.8" fill="none"/><line x1="1.5" y1="3" x2="4.5" y2="11" stroke="#e0633c" stroke-width="1.1"/><line x1="9" y1="11" x2="11.5" y2="5" stroke="#e0633c" stroke-width="0.9"/><circle cx="8" cy="2.9" r="0.95" fill="#ff1a1a"/><line x1="4" y1="11" x2="9" y2="11" stroke="#e0633c" stroke-width="0.7"/></svg>
<div class="b" style="left:303px;top:52.5px;width:12.8px;height:13px"></div>
<svg class="i" style="left:303px;top:52.5px" width="12.8" height="13" viewBox="0 0 13 13"><circle cx="6.5" cy="6.5" r="3.6" stroke="#2b2f2b" stroke-width="0.8" fill="none"/><line x1="1.5" y1="2.5" x2="5" y2="11.5" stroke="#e0633c" stroke-width="1.1"/><line x1="11.5" y1="2.5" x2="8" y2="11.5" stroke="#e0633c" stroke-width="1.1"/><line x1="6.5" y1="5" x2="5.5" y2="8" stroke="#c08050" stroke-width="0.5"/></svg>
<div class="b" style="left:316px;top:52.5px;width:12.8px;height:13px"></div>
<svg class="i" style="left:316px;top:52.5px" width="12.8" height="13" viewBox="0 0 13 13"><circle cx="6.5" cy="6.5" r="3.6" stroke="#2b2f2b" stroke-width="0.8" fill="none"/><path d="M1.5,3 L5,12 M11.5,3 L8,12 M2,3 L11,3" stroke="#e0633c" stroke-width="1.1" fill="none" stroke-linejoin="round" stroke-linecap="round"/><circle cx="4" cy="3" r="0.95" fill="#ff1a1a"/><circle cx="9" cy="3" r="0.95" fill="#ff1a1a"/></svg>
<div class="b" style="left:336px;top:52.5px;width:12.8px;height:13px"></div>
<svg class="i" style="left:336px;top:52.5px" width="12.8" height="13" viewBox="0 0 13 13"><path d="M2,8 Q4,3 9,3" stroke="#2b2f2b" stroke-width="0.8" fill="none" stroke-linejoin="round" stroke-linecap="round"/><circle cx="9.5" cy="10" r="0.95" fill="#ff1a1a"/><path d="M2,8 L2.5,7.5" stroke="#ff1a1a" stroke-width="0.6" fill="none" stroke-linejoin="round" stroke-linecap="round"/><circle cx="8.7" cy="3" r="0.5" fill="#c08050"/></svg>
<div class="b" style="left:352px;top:52.5px;width:12.8px;height:13px"></div>
<svg class="i" style="left:352px;top:52.5px" width="12.8" height="13" viewBox="0 0 13 13"><path d="M2,10 Q3,4 8.5,2.5" stroke="#2b2f2b" stroke-width="0.8" fill="none" stroke-linejoin="round" stroke-linecap="round"/><circle cx="2" cy="10" r="0.95" fill="#ff1a1a"/><circle cx="8.5" cy="2.5" r="0.95" fill="#ff1a1a"/><line x1="4" y1="10" x2="8" y2="5" stroke="#c08050" stroke-width="0.5"/></svg>
<div class="b" style="left:366px;top:52.5px;width:12.8px;height:13px"></div>
<svg class="i" style="left:366px;top:52.5px" width="12.8" height="13" viewBox="0 0 13 13"><path d="M2,10 Q4,4 9.5,2.5" stroke="#2b2f2b" stroke-width="0.8" fill="none" stroke-linejoin="round" stroke-linecap="round"/><circle cx="2" cy="10" r="0.95" fill="#ff1a1a"/><circle cx="9.5" cy="2.5" r="0.95" fill="#ff1a1a"/><line x1="4" y1="9" x2="8" y2="5" stroke="#e09070" stroke-width="0.6"/></svg>
<div class="b" style="left:379px;top:52.5px;width:12.8px;height:13px"></div>
<svg class="i" style="left:379px;top:52.5px" width="12.8" height="13" viewBox="0 0 13 13"><path d="M2,10 Q2,3 6.5,3 Q11,3 11,10" stroke="#2b2f2b" stroke-width="0.8" fill="none" stroke-linejoin="round" stroke-linecap="round"/><circle cx="2" cy="10" r="0.95" fill="#ff1a1a"/><circle cx="11" cy="10" r="0.95" fill="#ff1a1a"/><line x1="6.5" y1="3" x2="6.5" y2="10" stroke="#d09070" stroke-width="0.6"/></svg>
<div class="b" style="left:393px;top:52.5px;width:12.8px;height:13px"></div>
<svg class="i" style="left:393px;top:52.5px" width="12.8" height="13" viewBox="0 0 13 13"><path d="M2,10 L2,6 Q2,3 5,3 L9,3" stroke="#2b2f2b" stroke-width="0.8" fill="none" stroke-linejoin="round" stroke-linecap="round"/><circle cx="2" cy="10" r="0.95" fill="#ff1a1a"/><circle cx="5" cy="3" r="0.95" fill="#ff1a1a"/><circle cx="9.5" cy="3.5" r="0.95" fill="#ff1a1a"/></svg>
<div class="b" style="left:409px;top:52.5px;width:12.8px;height:13px"></div>
<svg class="i" style="left:409px;top:52.5px" width="12.8" height="13" viewBox="0 0 13 13"><path d="M2,10 L2,6 Q2,3 5,3 L9,3" stroke="#2b2f2b" stroke-width="0.8" fill="none" stroke-linejoin="round" stroke-linecap="round"/><circle cx="2" cy="10" r="0.95" fill="#ff1a1a"/><circle cx="5" cy="3" r="0.95" fill="#ff1a1a"/><circle cx="9.5" cy="3.5" r="0.95" fill="#ff1a1a"/></svg>
<div class="b" style="left:426px;top:52.5px;width:12.8px;height:13px"></div>
<svg class="i" style="left:426px;top:52.5px" width="12.8" height="13" viewBox="0 0 13 13"><path d="M2,7 Q7,2 10,8" stroke="#2b2f2b" stroke-width="0.7" fill="none" stroke-linejoin="round" stroke-linecap="round"/><line x1="2" y1="7" x2="6" y2="5" stroke="#e0633c" stroke-width="0.6"/><circle cx="10" cy="8" r="0.95" fill="#ff1a1a"/></svg>
<div class="b" style="left:439px;top:52.5px;width:12.8px;height:13px"></div>
<svg class="i" style="left:439px;top:52.5px" width="12.8" height="13" viewBox="0 0 13 13"><line x1="3" y1="1.5" x2="3" y2="11.5" stroke="#e0633c" stroke-width="0.8"/><path d="M3,11 Q4,5 10,3" stroke="#2b2f2b" stroke-width="0.7" fill="none" stroke-linejoin="round" stroke-linecap="round"/><line x1="5" y1="5" x2="10" y2="10" stroke="#e0633c" stroke-width="0.6"/><circle cx="10" cy="3" r="0.95" fill="#ff1a1a"/></svg>
<div class="a" style="left:3px;top:71px;width:119px;height:8.8px;border:1px solid #4f8f4e;border-radius:2px;background:linear-gradient(#6eac6d,#a5cfa3 60%,#cfe6cd);box-shadow:0 0 0 .6px rgba(228,243,226,.7)"></div>
<div class="t" style="left:4.8px;top:72.49px;font-size:6.0px;color:#1a2a1a;transform:scaleX(0.986);transform-origin:0 0;-webkit-text-stroke:0.2px #1a2a1a;">G-Code (G41/G42) [mm]</div>
<div class="a" style="left:114.5px;top:71.8px;width:7px;height:7.2px;border:0.8px solid #8a8a98;border-radius:1px;background:linear-gradient(#e8ece8,#c8d8c8)"></div>
<svg class="i" style="left:114.5px;top:71.8px" width="7" height="7" viewBox="0 0 7 7"><path d="M2.3,3 L4.7,3 L3.5,4.3 Z" fill="#555"/></svg>
<div class="b" style="left:123px;top:69px;width:12.5px;height:12.5px"></div>
<svg class="i" style="left:123px;top:69px" width="12.5" height="12.5" viewBox="0 0 13 13"><path d="M2,2.5 L8,2.5 M5,2.5 L5,10 M2,10 L7,10" stroke="#000" stroke-width="2.0" fill="none" stroke-linejoin="round" stroke-linecap="round"/><circle cx="9.5" cy="8.5" r="1.6" stroke="#8a8a9a" stroke-width="0.8" fill="none"/></svg>
<div class="b" style="left:137px;top:69px;width:12.5px;height:12.5px"></div>
<svg class="i" style="left:137px;top:69px" width="12.5" height="12.5" viewBox="0 0 13 13"><path d="M2,2.5 L8,2.5 M5,2.5 L5,10 M2,10 L7,10" stroke="#000" stroke-width="2.0" fill="none" stroke-linejoin="round" stroke-linecap="round"/><path d="M7,7.5 L10,7.5 L10,6 L12,8 L10,10 L10,8.5 L7,8.5 Z" stroke="none" stroke-width="0" fill="#f02020" stroke-linejoin="round" stroke-linecap="round"/></svg>
<div class="b" style="left:152px;top:69px;width:12.5px;height:12.5px"></div>
<svg class="i" style="left:152px;top:69px" width="12.5" height="12.5" viewBox="0 0 13 13"><path d="M2,2.5 L8,2.5 M5,2.5 L5,10 M2,10 L7,10" stroke="#000" stroke-width="2.0" fill="none" stroke-linejoin="round" stroke-linecap="round"/><path d="M7,7.5 L10,7.5 L10,6 L12,8 L10,10 L10,8.5 L7,8.5 Z" stroke="none" stroke-width="0" fill="#30c030" stroke-linejoin="round" stroke-linecap="round"/></svg>
<div class="f" style="left:169px;top:69px;width:12.5px;height:12.5px"></div>
<svg class="i" style="left:169px;top:69px" width="12.5" height="12.5" viewBox="0 0 13 13"><path d="M2,2.5 L8,2.5 M5,2.5 L5,10 M2,10 L7,10" stroke="#000" stroke-width="2.0" fill="none" stroke-linejoin="round" stroke-linecap="round"/><line x1="8" y1="10" x2="11" y2="7" stroke="#555" stroke-width="1.2"/><circle cx="10.5" cy="7.5" r="1" stroke="#555" stroke-width="0.5" fill="none"/></svg>
<div class="d" style="left:185px;top:69px;width:12.5px;height:12.5px"></div>
<svg class="i" style="left:185px;top:69px" width="12.5" height="12.5" viewBox="0 0 13 13"><polygon points="1.50,6.50 6.50,3.00 11.50,6.50 6.50,10.00" stroke="#8a8a8a" stroke-width="0.5" fill="#a6a6a6"/><line x1="1.5" y1="6.5" x2="6.5" y2="10" stroke="#6a6a6a" stroke-width="0.6"/></svg>
<div class="d" style="left:198px;top:69px;width:12.5px;height:12.5px"></div>
<svg class="i" style="left:198px;top:69px" width="12.5" height="12.5" viewBox="0 0 13 13"><polygon points="1.50,6.50 6.50,3.00 11.50,6.50 6.50,10.00" stroke="#8a8a8a" stroke-width="0.5" fill="#a6a6a6"/><line x1="1.5" y1="6.5" x2="6.5" y2="10" stroke="#6a6a6a" stroke-width="0.6"/></svg>
<div class="b" style="left:215px;top:69px;width:12.5px;height:12.5px"></div>
<svg class="i" style="left:215px;top:69px" width="12.5" height="12.5" viewBox="0 0 13 13"><polygon points="1.00,5.00 6.00,2.00 11.00,5.00 6.00,8.00" stroke="#203080" stroke-width="0.5" fill="#4a70c8"/><line x1="3" y1="5" x2="8" y2="2.5" stroke="#2040a0" stroke-width="0.6"/><rect x="7.5" y="7.5" width="4" height="4" fill="#000" stroke="none" stroke-width="0.6" rx="0"/></svg>
<div class="d" style="left:233px;top:69px;width:12.5px;height:12.5px"></div>
<svg class="i" style="left:233px;top:69px" width="12.5" height="12.5" viewBox="0 0 13 13"><rect x="2" y="2" width="4" height="4" fill="#d8d8d8" stroke="#888" stroke-width="0.4" rx="0"/><rect x="4" y="5" width="5" height="6" fill="#c8c8c8" stroke="#888" stroke-width="0.4" rx="0"/><rect x="8" y="2" width="2" height="4" fill="#fff" stroke="#888" stroke-width="0.4" rx="0"/></svg>
<div class="d" style="left:246px;top:69px;width:12.5px;height:12.5px"></div>
<svg class="i" style="left:246px;top:69px" width="12.5" height="12.5" viewBox="0 0 13 13"><rect x="3" y="2.5" width="6" height="7.5" fill="#e8e8e8" stroke="#888" stroke-width="0.5" rx="0"/><text x="6" y="8" font-size="4" fill="#666" font-family="Liberation Sans" font-weight="normal" text-anchor="middle">N</text></svg>
<div class="a" style="left:27px;top:84px;width:652.5px;height:14px;background:#c4e0c2"></div>
<div class="t" style="left:332.8px;top:87.89px;font-size:6.0px;color:#3a4c3a;transform:scaleX(0.981);transform-origin:0 0;">Sample-File.dxf</div>
<svg class="i" style="left:666.8px;top:88.6px" width="5.5" height="4.5" viewBox="0 0 5.5 4.5"><path d="M0.5,0.3 L5,4.2 M5,0.3 L0.5,4.2" stroke="#7c827c" stroke-width="1.1"/></svg>
<svg class="i" style="left:32.5px;top:86.5px" width="7" height="7" viewBox="0 0 7 7"><circle cx="3.3" cy="3.3" r="2.6" fill="#f4f6fa" stroke="#2a4a8a" stroke-width="0.9"/><path d="M1.5,3.5 L4.5,3 L4,4.5 Z" fill="#e8b040"/><path d="M4.5,4.8 L6.3,6.5" stroke="#e06020" stroke-width="1"/></svg>
<div class="a" style="left:27.2px;top:97.7px;width:652.3px;height:271px;background:#222a33"></div>
<svg class="i" style="left:0;top:0" width="690" height="453" viewBox="0 0 690 453">
<rect x="121.8" y="108.8" width="463.4" height="249.4" fill="#ff00ff" stroke="#0a4a16" stroke-width="0.9"/>
<path d="M584.6,109.5 L584.6,357.5" stroke="#f6d6f6" stroke-width="0.7"/>
<g fill="#222a33" stroke="#f4c4f4" stroke-width="0.6"><rect x="128.00" y="114.30" width="25" height="25" rx="3.6" ry="3.6"/><rect x="158.43" y="114.30" width="25" height="25" rx="3.6" ry="3.6"/><rect x="188.86" y="114.30" width="25" height="25" rx="3.6" ry="3.6"/><rect x="219.29" y="114.30" width="25" height="25" rx="3.6" ry="3.6"/><rect x="249.72" y="114.30" width="25" height="25" rx="3.6" ry="3.6"/><rect x="280.15" y="114.30" width="25" height="25" rx="3.6" ry="3.6"/><rect x="310.58" y="114.30" width="25" height="25" rx="3.6" ry="3.6"/><rect x="341.01" y="114.30" width="25" height="25" rx="3.6" ry="3.6"/><rect x="371.44" y="114.30" width="25" height="25" rx="3.6" ry="3.6"/><rect x="401.87" y="114.30" width="25" height="25" rx="3.6" ry="3.6"/><rect x="432.30" y="114.30" width="25" height="25" rx="3.6" ry="3.6"/><rect x="462.73" y="114.30" width="25" height="25" rx="3.6" ry="3.6"/><rect x="493.16" y="114.30" width="25" height="25" rx="3.6" ry="3.6"/><rect x="523.59" y="114.30" width="25" height="25" rx="3.6" ry="3.6"/><rect x="554.02" y="114.30" width="25" height="25" rx="3.6" ry="3.6"/><rect x="128.00" y="144.79" width="25" height="25" rx="3.6" ry="3.6"/><rect x="158.43" y="144.79" width="25" height="25" rx="3.6" ry="3.6"/><rect x="188.86" y="144.79" width="25" height="25" rx="3.6" ry="3.6"/><rect x="219.29" y="144.79" width="25" height="25" rx="3.6" ry="3.6"/><rect x="249.72" y="144.79" width="25" height="25" rx="3.6" ry="3.6"/><rect x="280.15" y="144.79" width="25" height="25" rx="3.6" ry="3.6"/><rect x="310.58" y="144.79" width="25" height="25" rx="3.6" ry="3.6"/><rect x="341.01" y="144.79" width="25" height="25" rx="3.6" ry="3.6"/><rect x="371.44" y="144.79" width="25" height="25" rx="3.6" ry="3.6"/><rect x="401.87" y="144.79" width="25" height="25" rx="3.6" ry="3.6"/><rect x="432.30" y="144.79" width="25" height="25" rx="3.6" ry="3.6"/><rect x="462.73" y="144.79" width="25" height="25" rx="3.6" ry="3.6"/><rect x="493.16" y="144.79" width="25" height="25" rx="3.6" ry="3.6"/><rect x="523.59" y="144.79" width="25" height="25" rx="3.6" ry="3.6"/><rect x="554.02" y="144.79" width="25" height="25" rx="3.6" ry="3.6"/><rect x="128.00" y="175.28" width="25" height="25" rx="3.6" ry="3.6"/><rect x="158.43" y="175.28" width="25" height="25" rx="3.6" ry="3.6"/><rect x="188.86" y="175.28" width="25" height="25" rx="3.6" ry="3.6"/><rect x="219.29" y="175.28" width="25" height="25" rx="3.6" ry="3.6"/><rect x="249.72" y="175.28" width="25" height="25" rx="3.6" ry="3.6"/><rect x="280.15" y="175.28" width="25" height="25" rx="3.6" ry="3.6"/><rect x="310.58" y="175.28" width="25" height="25" rx="3.6" ry="3.6"/><rect x="341.01" y="175.28" width="25" height="25" rx="3.6" ry="3.6"/><rect x="371.44" y="175.28" width="25" height="25" rx="3.6" ry="3.6"/><rect x="401.87" y="175.28" width="25" height="25" rx="3.6" ry="3.6"/><rect x="432.30" y="175.28" width="25" height="25" rx="3.6" ry="3.6"/><rect x="462.73" y="175.28" width="25" height="25" rx="3.6" ry="3.6"/><rect x="493.16" y="175.28" width="25" height="25" rx="3.6" ry="3.6"/><rect x="523.59" y="175.28" width="25" height="25" rx="3.6" ry="3.6"/><rect x="554.02" y="175.28" width="25" height="25" rx="3.6" ry="3.6"/><rect x="128.00" y="205.77" width="25" height="25" rx="3.6" ry="3.6"/><rect x="158.43" y="205.77" width="25" height="25" rx="3.6" ry="3.6"/><rect x="188.86" y="205.77" width="25" height="25" rx="3.6" ry="3.6"/><rect x="219.29" y="205.77" width="25" height="25" rx="3.6" ry="3.6"/><rect x="249.72" y="205.77" width="25" height="25" rx="3.6" ry="3.6"/><rect x="280.15" y="205.77" width="25" height="25" rx="3.6" ry="3.6"/><rect x="310.58" y="205.77" width="25" height="25" rx="3.6" ry="3.6"/><rect x="341.01" y="205.77" width="25" height="25" rx="3.6" ry="3.6"/><rect x="371.44" y="205.77" width="25" height="25" rx="3.6" ry="3.6"/><rect x="401.87" y="205.77" width="25" height="25" rx="3.6" ry="3.6"/><rect x="432.30" y="205.77" width="25" height="25" rx="3.6" ry="3.6"/><rect x="462.73" y="205.77" width="25" height="25" rx="3.6" ry="3.6"/><rect x="493.16" y="205.77" width="25" height="25" rx="3.6" ry="3.6"/><rect x="523.59" y="205.77" width="25" height="25" rx="3.6" ry="3.6"/><rect x="554.02" y="205.77" width="25" height="25" rx="3.6" ry="3.6"/><rect x="128.00" y="236.26" width="25" height="25" rx="3.6" ry="3.6"/><rect x="158.43" y="236.26" width="25" height="25" rx="3.6" ry="3.6"/><rect x="188.86" y="236.26" width="25" height="25" rx="3.6" ry="3.6"/><rect x="219.29" y="236.26" width="25" height="25" rx="3.6" ry="3.6"/><rect x="249.72" y="236.26" width="25" height="25" rx="3.6" ry="3.6"/><rect x="280.15" y="236.26" width="25" height="25" rx="3.6" ry="3.6"/><rect x="310.58" y="236.26" width="25" height="25" rx="3.6" ry="3.6"/><rect x="341.01" y="236.26" width="25" height="25" rx="3.6" ry="3.6"/><rect x="371.44" y="236.26" width="25" height="25" rx="3.6" ry="3.6"/><rect x="401.87" y="236.26" width="25" height="25" rx="3.6" ry="3.6"/><rect x="432.30" y="236.26" width="25" height="25" rx="3.6" ry="3.6"/><rect x="462.73" y="236.26" width="25" height="25" rx="3.6" ry="3.6"/><rect x="493.16" y="236.26" width="25" height="25" rx="3.6" ry="3.6"/><rect x="523.59" y="236.26" width="25" height="25" rx="3.6" ry="3.6"/><rect x="554.02" y="236.26" width="25" height="25" rx="3.6" ry="3.6"/><rect x="128.00" y="266.75" width="25" height="25" rx="3.6" ry="3.6"/><rect x="158.43" y="266.75" width="25" height="25" rx="3.6" ry="3.6"/><rect x="188.86" y="266.75" width="25" height="25" rx="3.6" ry="3.6"/><rect x="219.29" y="266.75" width="25" height="25" rx="3.6" ry="3.6"/><rect x="249.72" y="266.75" width="25" height="25" rx="3.6" ry="3.6"/><rect x="280.15" y="266.75" width="25" height="25" rx="3.6" ry="3.6"/><rect x="310.58" y="266.75" width="25" height="25" rx="3.6" ry="3.6"/><rect x="341.01" y="266.75" width="25" height="25" rx="3.6" ry="3.6"/><rect x="371.44" y="266.75" width="25" height="25" rx="3.6" ry="3.6"/><rect x="401.87" y="266.75" width="25" height="25" rx="3.6" ry="3.6"/><rect x="432.30" y="266.75" width="25" height="25" rx="3.6" ry="3.6"/><rect x="462.73" y="266.75" width="25" height="25" rx="3.6" ry="3.6"/><rect x="493.16" y="266.75" width="25" height="25" rx="3.6" ry="3.6"/><rect x="523.59" y="266.75" width="25" height="25" rx="3.6" ry="3.6"/><rect x="554.02" y="266.75" width="25" height="25" rx="3.6" ry="3.6"/><rect x="128.00" y="297.24" width="25" height="25" rx="3.6" ry="3.6"/><rect x="158.43" y="297.24" width="25" height="25" rx="3.6" ry="3.6"/><rect x="188.86" y="297.24" width="25" height="25" rx="3.6" ry="3.6"/><rect x="219.29" y="297.24" width="25" height="25" rx="3.6" ry="3.6"/><rect x="249.72" y="297.24" width="25" height="25" rx="3.6" ry="3.6"/><rect x="280.15" y="297.24" width="25" height="25" rx="3.6" ry="3.6"/><rect x="310.58" y="297.24" width="25" height="25" rx="3.6" ry="3.6"/><rect x="341.01" y="297.24" width="25" height="25" rx="3.6" ry="3.6"/><rect x="371.44" y="297.24" width="25" height="25" rx="3.6" ry="3.6"/><rect x="401.87" y="297.24" width="25" height="25" rx="3.6" ry="3.6"/><rect x="432.30" y="297.24" width="25" height="25" rx="3.6" ry="3.6"/><rect x="462.73" y="297.24" width="25" height="25" rx="3.6" ry="3.6"/><rect x="493.16" y="297.24" width="25" height="25" rx="3.6" ry="3.6"/><rect x="523.59" y="297.24" width="25" height="25" rx="3.6" ry="3.6"/><rect x="554.02" y="297.24" width="25" height="25" rx="3.6" ry="3.6"/><rect x="128.00" y="327.73" width="25" height="25" rx="3.6" ry="3.6"/><rect x="158.43" y="327.73" width="25" height="25" rx="3.6" ry="3.6"/><rect x="188.86" y="327.73" width="25" height="25" rx="3.6" ry="3.6"/><rect x="219.29" y="327.73" width="25" height="25" rx="3.6" ry="3.6"/><rect x="249.72" y="327.73" width="25" height="25" rx="3.6" ry="3.6"/><rect x="280.15" y="327.73" width="25" height="25" rx="3.6" ry="3.6"/><rect x="310.58" y="327.73" width="25" height="25" rx="3.6" ry="3.6"/><rect x="341.01" y="327.73" width="25" height="25" rx="3.6" ry="3.6"/><rect x="371.44" y="327.73" width="25" height="25" rx="3.6" ry="3.6"/><rect x="401.87" y="327.73" width="25" height="25" rx="3.6" ry="3.6"/><rect x="432.30" y="327.73" width="25" height="25" rx="3.6" ry="3.6"/><rect x="462.73" y="327.73" width="25" height="25" rx="3.6" ry="3.6"/><rect x="493.16" y="327.73" width="25" height="25" rx="3.6" ry="3.6"/><rect x="523.59" y="327.73" width="25" height="25" rx="3.6" ry="3.6"/><rect x="554.02" y="327.73" width="25" height="25" rx="3.6" ry="3.6"/></g>
<g fill="none" stroke="#0a3612" stroke-width="0.75"><rect x="128.60" y="114.90" width="23.8" height="23.8" rx="3" ry="3"/><rect x="159.03" y="114.90" width="23.8" height="23.8" rx="3" ry="3"/><rect x="189.46" y="114.90" width="23.8" height="23.8" rx="3" ry="3"/><rect x="219.89" y="114.90" width="23.8" height="23.8" rx="3" ry="3"/><rect x="250.32" y="114.90" width="23.8" height="23.8" rx="3" ry="3"/><rect x="280.75" y="114.90" width="23.8" height="23.8" rx="3" ry="3"/><rect x="311.18" y="114.90" width="23.8" height="23.8" rx="3" ry="3"/><rect x="341.61" y="114.90" width="23.8" height="23.8" rx="3" ry="3"/><rect x="372.04" y="114.90" width="23.8" height="23.8" rx="3" ry="3"/><rect x="402.47" y="114.90" width="23.8" height="23.8" rx="3" ry="3"/><rect x="432.90" y="114.90" width="23.8" height="23.8" rx="3" ry="3"/><rect x="463.33" y="114.90" width="23.8" height="23.8" rx="3" ry="3"/><rect x="493.76" y="114.90" width="23.8" height="23.8" rx="3" ry="3"/><rect x="524.19" y="114.90" width="23.8" height="23.8" rx="3" ry="3"/><rect x="554.62" y="114.90" width="23.8" height="23.8" rx="3" ry="3"/><rect x="128.60" y="145.39" width="23.8" height="23.8" rx="3" ry="3"/><rect x="159.03" y="145.39" width="23.8" height="23.8" rx="3" ry="3"/><rect x="189.46" y="145.39" width="23.8" height="23.8" rx="3" ry="3"/><rect x="219.89" y="145.39" width="23.8" height="23.8" rx="3" ry="3"/><rect x="250.32" y="145.39" width="23.8" height="23.8" rx="3" ry="3"/><rect x="280.75" y="145.39" width="23.8" height="23.8" rx="3" ry="3"/><rect x="311.18" y="145.39" width="23.8" height="23.8" rx="3" ry="3"/><rect x="341.61" y="145.39" width="23.8" height="23.8" rx="3" ry="3"/><rect x="372.04" y="145.39" width="23.8" height="23.8" rx="3" ry="3"/><rect x="402.47" y="145.39" width="23.8" height="23.8" rx="3" ry="3"/><rect x="432.90" y="145.39" width="23.8" height="23.8" rx="3" ry="3"/><rect x="463.33" y="145.39" width="23.8" height="23.8" rx="3" ry="3"/><rect x="493.76" y="145.39" width="23.8" height="23.8" rx="3" ry="3"/><rect x="524.19" y="145.39" width="23.8" height="23.8" rx="3" ry="3"/><rect x="554.62" y="145.39" width="23.8" height="23.8" rx="3" ry="3"/><rect x="128.60" y="175.88" width="23.8" height="23.8" rx="3" ry="3"/><rect x="159.03" y="175.88" width="23.8" height="23.8" rx="3" ry="3"/><rect x="189.46" y="175.88" width="23.8" height="23.8" rx="3" ry="3"/><rect x="219.89" y="175.88" width="23.8" height="23.8" rx="3" ry="3"/><rect x="250.32" y="175.88" width="23.8" height="23.8" rx="3" ry="3"/><rect x="280.75" y="175.88" width="23.8" height="23.8" rx="3" ry="3"/><rect x="311.18" y="175.88" width="23.8" height="23.8" rx="3" ry="3"/><rect x="341.61" y="175.88" width="23.8" height="23.8" rx="3" ry="3"/><rect x="372.04" y="175.88" width="23.8" height="23.8" rx="3" ry="3"/><rect x="402.47" y="175.88" width="23.8" height="23.8" rx="3" ry="3"/><rect x="432.90" y="175.88" width="23.8" height="23.8" rx="3" ry="3"/><rect x="463.33" y="175.88" width="23.8" height="23.8" rx="3" ry="3"/><rect x="493.76" y="175.88" width="23.8" height="23.8" rx="3" ry="3"/><rect x="524.19" y="175.88" width="23.8" height="23.8" rx="3" ry="3"/><rect x="554.62" y="175.88" width="23.8" height="23.8" rx="3" ry="3"/><rect x="128.60" y="206.37" width="23.8" height="23.8" rx="3" ry="3"/><rect x="159.03" y="206.37" width="23.8" height="23.8" rx="3" ry="3"/><rect x="189.46" y="206.37" width="23.8" height="23.8" rx="3" ry="3"/><rect x="219.89" y="206.37" width="23.8" height="23.8" rx="3" ry="3"/><rect x="250.32" y="206.37" width="23.8" height="23.8" rx="3" ry="3"/><rect x="280.75" y="206.37" width="23.8" height="23.8" rx="3" ry="3"/><rect x="311.18" y="206.37" width="23.8" height="23.8" rx="3" ry="3"/><rect x="341.61" y="206.37" width="23.8" height="23.8" rx="3" ry="3"/><rect x="372.04" y="206.37" width="23.8" height="23.8" rx="3" ry="3"/><rect x="402.47" y="206.37" width="23.8" height="23.8" rx="3" ry="3"/><rect x="432.90" y="206.37" width="23.8" height="23.8" rx="3" ry="3"/><rect x="463.33" y="206.37" width="23.8" height="23.8" rx="3" ry="3"/><rect x="493.76" y="206.37" width="23.8" height="23.8" rx="3" ry="3"/><rect x="524.19" y="206.37" width="23.8" height="23.8" rx="3" ry="3"/><rect x="554.62" y="206.37" width="23.8" height="23.8" rx="3" ry="3"/><rect x="128.60" y="236.86" width="23.8" height="23.8" rx="3" ry="3"/><rect x="159.03" y="236.86" width="23.8" height="23.8" rx="3" ry="3"/><rect x="189.46" y="236.86" width="23.8" height="23.8" rx="3" ry="3"/><rect x="219.89" y="236.86" width="23.8" height="23.8" rx="3" ry="3"/><rect x="250.32" y="236.86" width="23.8" height="23.8" rx="3" ry="3"/><rect x="280.75" y="236.86" width="23.8" height="23.8" rx="3" ry="3"/><rect x="311.18" y="236.86" width="23.8" height="23.8" rx="3" ry="3"/><rect x="341.61" y="236.86" width="23.8" height="23.8" rx="3" ry="3"/><rect x="372.04" y="236.86" width="23.8" height="23.8" rx="3" ry="3"/><rect x="402.47" y="236.86" width="23.8" height="23.8" rx="3" ry="3"/><rect x="432.90" y="236.86" width="23.8" height="23.8" rx="3" ry="3"/><rect x="463.33" y="236.86" width="23.8" height="23.8" rx="3" ry="3"/><rect x="493.76" y="236.86" width="23.8" height="23.8" rx="3" ry="3"/><rect x="524.19" y="236.86" width="23.8" height="23.8" rx="3" ry="3"/><rect x="554.62" y="236.86" width="23.8" height="23.8" rx="3" ry="3"/><rect x="128.60" y="267.35" width="23.8" height="23.8" rx="3" ry="3"/><rect x="159.03" y="267.35" width="23.8" height="23.8" rx="3" ry="3"/><rect x="189.46" y="267.35" width="23.8" height="23.8" rx="3" ry="3"/><rect x="219.89" y="267.35" width="23.8" height="23.8" rx="3" ry="3"/><rect x="250.32" y="267.35" width="23.8" height="23.8" rx="3" ry="3"/><rect x="280.75" y="267.35" width="23.8" height="23.8" rx="3" ry="3"/><rect x="311.18" y="267.35" width="23.8" height="23.8" rx="3" ry="3"/><rect x="341.61" y="267.35" width="23.8" height="23.8" rx="3" ry="3"/><rect x="372.04" y="267.35" width="23.8" height="23.8" rx="3" ry="3"/><rect x="402.47" y="267.35" width="23.8" height="23.8" rx="3" ry="3"/><rect x="432.90" y="267.35" width="23.8" height="23.8" rx="3" ry="3"/><rect x="463.33" y="267.35" width="23.8" height="23.8" rx="3" ry="3"/><rect x="493.76" y="267.35" width="23.8" height="23.8" rx="3" ry="3"/><rect x="524.19" y="267.35" width="23.8" height="23.8" rx="3" ry="3"/><rect x="554.62" y="267.35" width="23.8" height="23.8" rx="3" ry="3"/><rect x="128.60" y="297.84" width="23.8" height="23.8" rx="3" ry="3"/><rect x="159.03" y="297.84" width="23.8" height="23.8" rx="3" ry="3"/><rect x="189.46" y="297.84" width="23.8" height="23.8" rx="3" ry="3"/><rect x="219.89" y="297.84" width="23.8" height="23.8" rx="3" ry="3"/><rect x="250.32" y="297.84" width="23.8" height="23.8" rx="3" ry="3"/><rect x="280.75" y="297.84" width="23.8" height="23.8" rx="3" ry="3"/><rect x="311.18" y="297.84" width="23.8" height="23.8" rx="3" ry="3"/><rect x="341.61" y="297.84" width="23.8" height="23.8" rx="3" ry="3"/><rect x="372.04" y="297.84" width="23.8" height="23.8" rx="3" ry="3"/><rect x="402.47" y="297.84" width="23.8" height="23.8" rx="3" ry="3"/><rect x="432.90" y="297.84" width="23.8" height="23.8" rx="3" ry="3"/><rect x="463.33" y="297.84" width="23.8" height="23.8" rx="3" ry="3"/><rect x="493.76" y="297.84" width="23.8" height="23.8" rx="3" ry="3"/><rect x="524.19" y="297.84" width="23.8" height="23.8" rx="3" ry="3"/><rect x="554.62" y="297.84" width="23.8" height="23.8" rx="3" ry="3"/><rect x="128.60" y="328.33" width="23.8" height="23.8" rx="3" ry="3"/><rect x="159.03" y="328.33" width="23.8" height="23.8" rx="3" ry="3"/><rect x="189.46" y="328.33" width="23.8" height="23.8" rx="3" ry="3"/><rect x="219.89" y="328.33" width="23.8" height="23.8" rx="3" ry="3"/><rect x="250.32" y="328.33" width="23.8" height="23.8" rx="3" ry="3"/><rect x="280.75" y="328.33" width="23.8" height="23.8" rx="3" ry="3"/><rect x="311.18" y="328.33" width="23.8" height="23.8" rx="3" ry="3"/><rect x="341.61" y="328.33" width="23.8" height="23.8" rx="3" ry="3"/><rect x="372.04" y="328.33" width="23.8" height="23.8" rx="3" ry="3"/><rect x="402.47" y="328.33" width="23.8" height="23.8" rx="3" ry="3"/><rect x="432.90" y="328.33" width="23.8" height="23.8" rx="3" ry="3"/><rect x="463.33" y="328.33" width="23.8" height="23.8" rx="3" ry="3"/><rect x="493.76" y="328.33" width="23.8" height="23.8" rx="3" ry="3"/><rect x="524.19" y="328.33" width="23.8" height="23.8" rx="3" ry="3"/><rect x="554.62" y="328.33" width="23.8" height="23.8" rx="3" ry="3"/></g>
<path d="M113,358.2 L120.5,358.2 M122.4,360 L122.4,367" stroke="#3c6a40" stroke-width="0.7"/><circle cx="122.4" cy="358.2" r="1.8" fill="none" stroke="#3c6a40" stroke-width="0.6"/>
</svg>
<div class="a" style="left:0;top:84px;width:27px;height:354px;background:#c3dfc1"></div>
<div class="a" style="left:0;top:84px;width:26.5px;height:9.5px;background:#cae3c7"></div>
<div class="a" style="left:26.4px;top:84px;width:1px;height:354px;background:#a9c6a7"></div>
<div class="t" style="left:8px;top:85.57px;font-size:4.5px;color:#d6ead4;">CAD</div>
<div class="b" style="left:-1px;top:94.3px;width:12px;height:12.2px"></div>
<svg class="i" style="left:0;top:94.3px" width="11" height="12.2" viewBox="0 0 11 12.2"><circle cx="2.6" cy="3.5" r="0.9" fill="#222"/><circle cx="8.3" cy="6.6" r="0.9" fill="#222"/><circle cx="3" cy="9.3" r="0.9" fill="#222"/></svg>
<svg class="i" style="left:0;top:94.3px" width="11" height="12.2" viewBox="0 0 11 12.2"><path d="M9.9,9.6 L9.9,11.2 L8.3,11.2 Z" fill="#111"/></svg>
<div class="b" style="left:12.9px;top:94.3px;width:12px;height:12.2px"></div>
<svg class="i" style="left:12.9px;top:94.3px" width="12" height="12.2" viewBox="0 0 12 12.2"><line x1="1.3" y1="8.3" x2="10.3" y2="4.3" stroke="#2b2f2b" stroke-width="0.7"/></svg>
<svg class="i" style="left:12.9px;top:94.3px" width="12" height="12.2" viewBox="0 0 12 12.2"><path d="M10.9,9.6 L10.9,11.2 L9.3,11.2 Z" fill="#111"/></svg>
<div class="b" style="left:-1px;top:107.8px;width:12px;height:12.2px"></div>
<svg class="i" style="left:0;top:107.8px" width="11" height="12.2" viewBox="0 0 11 12.2"><path d="M1,10 Q1.5,3 8.6,2.2" stroke="#2b2f2b" stroke-width="0.75" fill="none" stroke-linejoin="round" stroke-linecap="round"/></svg>
<svg class="i" style="left:0;top:107.8px" width="11" height="12.2" viewBox="0 0 11 12.2"><path d="M9.9,9.6 L9.9,11.2 L8.3,11.2 Z" fill="#111"/></svg>
<div class="b" style="left:12.9px;top:107.8px;width:12px;height:12.2px"></div>
<svg class="i" style="left:12.9px;top:107.8px" width="12" height="12.2" viewBox="0 0 12 12.2"><circle cx="5.6" cy="5.8" r="3.8" stroke="#2b2f2b" stroke-width="0.7" fill="none"/></svg>
<svg class="i" style="left:12.9px;top:107.8px" width="12" height="12.2" viewBox="0 0 12 12.2"><path d="M10.9,9.6 L10.9,11.2 L9.3,11.2 Z" fill="#111"/></svg>
<div class="b" style="left:-1px;top:121.3px;width:12px;height:12.2px"></div>
<svg class="i" style="left:0;top:121.3px" width="11" height="12.2" viewBox="0 0 11 12.2"><path d="M1.2,10.5 Q0.5,8.5 5,4.5 Q9,1 10,2.2 Q10.8,4 6.5,8 Q2.5,11.5 1.2,10.5 Z" stroke="#2b2f2b" stroke-width="0.7" fill="none" stroke-linejoin="round" stroke-linecap="round"/></svg>
<svg class="i" style="left:0;top:121.3px" width="11" height="12.2" viewBox="0 0 11 12.2"><path d="M9.9,9.6 L9.9,11.2 L8.3,11.2 Z" fill="#111"/></svg>
<div class="b" style="left:12.9px;top:121.3px;width:12px;height:12.2px"></div>
<svg class="i" style="left:12.9px;top:121.3px" width="12" height="12.2" viewBox="0 0 12 12.2"><path d="M2,2.5 Q1,9 5,9 Q6,7 5.5,6 Q8,3 9.5,3.5 Q10,8 6.5,8 M2,2.5 Q5,3 5.5,6" stroke="#2b2f2b" stroke-width="0.65" fill="none" stroke-linejoin="round" stroke-linecap="round"/></svg>
<svg class="i" style="left:12.9px;top:121.3px" width="12" height="12.2" viewBox="0 0 12 12.2"><path d="M10.9,9.6 L10.9,11.2 L9.3,11.2 Z" fill="#111"/></svg>
<div class="b" style="left:-1px;top:134.8px;width:12px;height:12.2px"></div>
<svg class="i" style="left:0;top:134.8px" width="11" height="12.2" viewBox="0 0 11 12.2"><path d="M5,4 L1.5,6.5 L4,8.5 L10,8.5" stroke="#2b2f2b" stroke-width="0.7" fill="none" stroke-linejoin="round" stroke-linecap="round"/></svg>
<svg class="i" style="left:0;top:134.8px" width="11" height="12.2" viewBox="0 0 11 12.2"><path d="M9.9,9.6 L9.9,11.2 L8.3,11.2 Z" fill="#111"/></svg>
<div class="b" style="left:12.9px;top:134.8px;width:12px;height:12.2px"></div>
<svg class="i" style="left:12.9px;top:134.8px" width="12" height="12.2" viewBox="0 0 12 12.2"><circle cx="3.8" cy="3.8" r="2" stroke="#2b2f2b" stroke-width="0.6" fill="none"/><polygon points="8.50,2.50 10.50,6.00 6.50,6.00" stroke="#2b2f2b" stroke-width="0.6" fill="none"/><rect x="2.5" y="7.5" width="6" height="2.8" fill="none" stroke="#2b2f2b" stroke-width="0.6" rx="0"/></svg>
<svg class="i" style="left:12.9px;top:134.8px" width="12" height="12.2" viewBox="0 0 12 12.2"><path d="M10.9,9.6 L10.9,11.2 L9.3,11.2 Z" fill="#111"/></svg>
<div class="b" style="left:-1px;top:148.3px;width:12px;height:12.2px"></div>
<svg class="i" style="left:0;top:148.3px" width="11" height="12.2" viewBox="0 0 11 12.2"><path d="M1.5,9.5 L1.5,6.5 Q3,3.5 7,3.5 Q10,4 10,7 Q9,9.5 6,9.5 Z" stroke="#2b2f2b" stroke-width="0.65" fill="none" stroke-linejoin="round" stroke-linecap="round"/><path d="M3.5,8 Q5.5,5.5 7.5,8" stroke="#2b2f2b" stroke-width="0.5" fill="none" stroke-linejoin="round" stroke-linecap="round"/></svg>
<svg class="i" style="left:0;top:148.3px" width="11" height="12.2" viewBox="0 0 11 12.2"><path d="M9.9,9.6 L9.9,11.2 L8.3,11.2 Z" fill="#111"/></svg>
<div class="b" style="left:-1px;top:164.2px;width:12px;height:12.2px"></div>
<svg class="i" style="left:0;top:164.2px" width="11" height="12.2" viewBox="0 0 11 12.2"><text x="5.8" y="10.3" font-size="10.5" fill="#111" font-family="Liberation Serif" font-weight="normal" text-anchor="middle">A</text></svg>
<div class="b" style="left:12.9px;top:164.2px;width:12px;height:12.2px"></div>
<svg class="i" style="left:12.9px;top:164.2px" width="12" height="12.2" viewBox="0 0 12 12.2"><path d="M3,10 L3,3.5 L10,3.5 L10,10" stroke="#2b2f2b" stroke-width="0.8" fill="none" stroke-linejoin="round" stroke-linecap="round"/><line x1="2" y1="3.5" x2="5" y2="3.5" stroke="#111" stroke-width="1.4"/><line x1="8" y1="3.5" x2="11" y2="3.5" stroke="#111" stroke-width="1.4"/></svg>
<svg class="i" style="left:12.9px;top:164.2px" width="12" height="12.2" viewBox="0 0 12 12.2"><path d="M10.9,9.6 L10.9,11.2 L9.3,11.2 Z" fill="#111"/></svg>
<div class="b" style="left:-1px;top:178px;width:12px;height:12.2px"></div>
<svg class="i" style="left:0;top:178px" width="11" height="12.2" viewBox="0 0 11 12.2"><rect x="1.5" y="3" width="8.5" height="6.3" fill="#f4f4f4" stroke="#222" stroke-width="0.7" rx="0"/><path d="M2,9 L4.5,5.5 L6.5,7.5 L7.5,6.5 L10,9 Z" stroke="none" stroke-width="0" fill="#111" stroke-linejoin="round" stroke-linecap="round"/></svg>
<div class="b" style="left:-1px;top:194.6px;width:12px;height:12.2px"></div>
<svg class="i" style="left:0;top:194.6px" width="11" height="12.2" viewBox="0 0 11 12.2"><path d="M1.5,3 L1.5,11 L9,11 Z" stroke="#333" stroke-width="0.7" fill="#fff" stroke-linejoin="round" stroke-linecap="round"/><line x1="1.5" y1="1.5" x2="6" y2="6" stroke="#e02020" stroke-width="1.3"/><path d="M7.5,3 L6,11 M7.5,3 L9.5,11" stroke="#222" stroke-width="0.7" fill="none" stroke-linejoin="round" stroke-linecap="round"/></svg>
<svg class="i" style="left:0;top:194.6px" width="11" height="12.2" viewBox="0 0 11 12.2"><path d="M9.9,9.6 L9.9,11.2 L8.3,11.2 Z" fill="#111"/></svg>
<div class="b" style="left:12.9px;top:194.6px;width:12px;height:12.2px"></div>
<svg class="i" style="left:12.9px;top:194.6px" width="12" height="12.2" viewBox="0 0 12 12.2"><rect x="1.5" y="5" width="10" height="3" fill="#f0f0f0" stroke="#8a8a8a" stroke-width="0.6" rx="0"/></svg>
<div class="d" style="left:-1px;top:208.2px;width:12px;height:12.2px"></div>
<svg class="i" style="left:0;top:208.2px" width="11" height="12.2" viewBox="0 0 11 12.2"><rect x="2" y="3" width="5" height="4" fill="#f8f8f8" stroke="#bbb" stroke-width="0.5" rx="0"/><circle cx="7" cy="8" r="2" stroke="#bbb" stroke-width="0.5" fill="#f8f8f8"/></svg>
<div class="b" style="left:12.9px;top:208.2px;width:12px;height:12.2px"></div>
<svg class="i" style="left:12.9px;top:208.2px" width="12" height="12.2" viewBox="0 0 12 12.2"><line x1="2" y1="8" x2="10" y2="3.5" stroke="#e03030" stroke-width="0.8"/><path d="M6,6 L8.5,9.5" stroke="#888" stroke-width="1.0" fill="none" stroke-linejoin="round" stroke-linecap="round"/></svg>
<svg class="i" style="left:12.9px;top:208.2px" width="12" height="12.2" viewBox="0 0 12 12.2"><path d="M10.9,9.6 L10.9,11.2 L9.3,11.2 Z" fill="#111"/></svg>
<div class="b" style="left:-1px;top:225.5px;width:12px;height:12.2px"></div>
<svg class="i" style="left:0;top:225.5px" width="11" height="12.2" viewBox="0 0 11 12.2"><path d="M1,5.5 L6,3 L10.5,4.5 L10.5,8.5 L5.5,11 L1,9 Z M1,5.5 L5.5,7.5 L10.5,4.5 M5.5,7.5 L5.5,11" stroke="#222" stroke-width="0.75" fill="none" stroke-linejoin="miter"/></svg>
<svg class="i" style="left:0;top:225.5px" width="11" height="12.2" viewBox="0 0 11 12.2"><path d="M9.9,9.6 L9.9,11.2 L8.3,11.2 Z" fill="#111"/></svg>
<div class="b" style="left:-1px;top:242.2px;width:12px;height:12.2px"></div>
<svg class="i" style="left:0;top:242.2px" width="11" height="12.2" viewBox="0 0 11 12.2"><rect x="1" y="1.5" width="6" height="6" fill="#b88a60" stroke="none" stroke-width="0.6" rx="0"/><rect x="3.5" y="4.5" width="7" height="7" fill="#ffffff" stroke="none" stroke-width="0.6" rx="0"/><rect x="4" y="5" width="3" height="6" fill="#3a80e0" stroke="none" stroke-width="0.6" rx="0"/><rect x="7.5" y="5" width="2.5" height="6" fill="#3a80e0" stroke="none" stroke-width="0.6" rx="0"/><line x1="4.5" y1="11" x2="10.5" y2="3" stroke="#f0c020" stroke-width="1.1"/><path d="M1.5,6 L4,5 L3,7.5 Z" stroke="none" stroke-width="0" fill="#30a040" stroke-linejoin="round" stroke-linecap="round"/></svg>
<div class="d" style="left:-1px;top:259.4px;width:12px;height:12.2px"></div>
<svg class="i" style="left:0;top:259.4px" width="11" height="12.2" viewBox="0 0 11 12.2"><path d="M1.5,7 L5,10.5 L8,2.5 Q10,6 8,10.5" stroke="#8e8c9a" stroke-width="0.8" fill="none" stroke-linejoin="round" stroke-linecap="round"/></svg>
<div class="a" style="left:679.5px;top:84px;width:10.5px;height:354px;background:#c3dfc1"></div>
<div class="a" style="left:679.5px;top:97.7px;width:3px;height:340px;background:#d8ecd5"></div>
<div class="a" style="left:682.6px;top:84.4px;width:8px;height:34.8px;background:#d2e7cf;border:0.8px solid #98bf96;border-radius:1.5px"></div>
<div class="a" style="left:682.6px;top:121.4px;width:8px;height:35px;background:#b9d6b6;border:0.8px solid #98bf96;border-radius:1.5px"></div>
<div class="t" style="left:685.7px;top:115.2px;font-size:6px;color:#2f402f;transform:rotate(-90deg) scaleX(1.007);transform-origin:0 0;-webkit-text-stroke:0.2px #2f402f">Layer List</div>
<div class="t" style="left:684.5px;top:149px;font-size:6px;color:#2f402f;transform:rotate(-90deg) scaleX(0.915);transform-origin:0 0;-webkit-text-stroke:0.2px #2f402f">Block List</div>
<div class="t" style="left:684.3px;top:194.19px;font-size:6.0px;color:#1c2c1c;font-weight:bold;">Pe</div>
<div class="t" style="left:685px;top:206.19px;font-size:6.0px;color:#2c3f2c;">S</div>
<div class="t" style="left:685px;top:216.19px;font-size:6.0px;color:#2c3f2c;">C</div>
<div class="a" style="left:686px;top:225px;width:8px;height:71px;border:0.8px solid #98bf96;border-radius:1px;background:#c8e2c6"></div>
<div class="t" style="left:684.3px;top:343.40px;font-size:6.0px;color:#1c2c1c;font-weight:bold;">Cl</div>
<div class="a" style="left:683px;top:350.4px;width:7px;height:87.6px;background:#222a33"></div>
<div class="a" style="left:27.2px;top:369px;width:652.3px;height:69px;background:#c9e3c7"></div>
<div class="a" style="left:27.3px;top:372.3px;width:652px;height:54.5px;border:1px solid #6a9368;border-radius:1.5px;background:#c2ddbf"></div>
<div class="t" style="left:30.1px;top:375.20px;font-size:6.0px;color:#2a442a;">QCAD 3.27.7 / Linux x86_64</div>
<div class="t" style="left:30.1px;top:381.80px;font-size:6.0px;color:#2a442a;">Opening drawing: /home/john/Desktop/Sample-File.dxf...</div>
<div class="t" style="left:30.1px;top:388.40px;font-size:6.0px;color:#2a442a;">Drawing loaded successfully: /home/john/Desktop/Sample-File.dxf</div>
<div class="t" style="left:30.1px;top:395.00px;font-size:6.0px;color:#2a442a;">Format: R27 (2013) DXF Drawing (OpenDesign) (*.dxf)</div>
<div class="t" style="left:27.8px;top:429.90px;font-size:6.0px;color:#2a442a;transform:scaleX(0.944);transform-origin:0 0;">Command:</div>
<div class="a" style="left:59px;top:429.5px;width:611px;height:8px;background:#7ab679;border:0.8px solid #4a884a;border-radius:1px"></div>
<div class="a" style="left:670.5px;top:429.6px;width:8px;height:7.8px;border:0.8px solid #5a5a5a;border-radius:1px;background:linear-gradient(#f0f4f0,#b8c8b8)"></div>
<div class="a" style="left:672px;top:432.2px;width:5px;height:1px;background:#333"></div>
<div class="a" style="left:0;top:438px;width:690px;height:15px;background:#c2ddbf"></div>
<div class="a" style="left:0;top:437.8px;width:690px;height:0.9px;background:#6a8f68"></div>
<div class="a" style="left:142.8px;top:438.5px;width:0.8px;height:15px;background:#a9c9a6"></div>
<div class="a" style="left:289.8px;top:444px;width:0.8px;height:9px;background:#d2e6cf"></div>
<div class="t" style="left:0px;top:441.50px;font-size:6.0px;color:#2a442a;">163.86,252.46</div>
<div class="t" style="left:0px;top:449.70px;font-size:6.0px;color:#2a442a;">@163.86,252.46</div>
<div class="t" style="left:145.2px;top:441.30px;font-size:6.0px;color:#2a442a;transform:scaleX(1.016);transform-origin:0 0;">300.97&lt;123°</div>
<div class="t" style="left:145.2px;top:449.70px;font-size:6.0px;color:#2a442a;">@300.97&lt;123°</div>
<div class="t" style="left:345.2px;top:445.40px;font-size:6.0px;color:#2a3c2a;transform:scaleX(1.012);transform-origin:0 0;">Select entity or region</div>
<div class="t" style="left:541.7px;top:445.40px;font-size:6.0px;color:#2a3c2a;transform:scaleX(1.018);transform-origin:0 0;">No entities selected.</div>
<svg class="i" style="left:410.5px;top:441px" width="9" height="13" viewBox="0 0 9 13"><path d="M1,5 Q1,0.7 4.5,0.7 Q8,0.7 8,5 L8,13 L1,13 Z" fill="#ffffff" stroke="#444" stroke-width="0.7"/><path d="M1,5.5 L8,5.5 M4.5,0.7 L4.5,5.5" stroke="#555" stroke-width="0.5"/><rect x="3.7" y="2" width="1.6" height="2.5" fill="#555"/></svg>
</body></html>
